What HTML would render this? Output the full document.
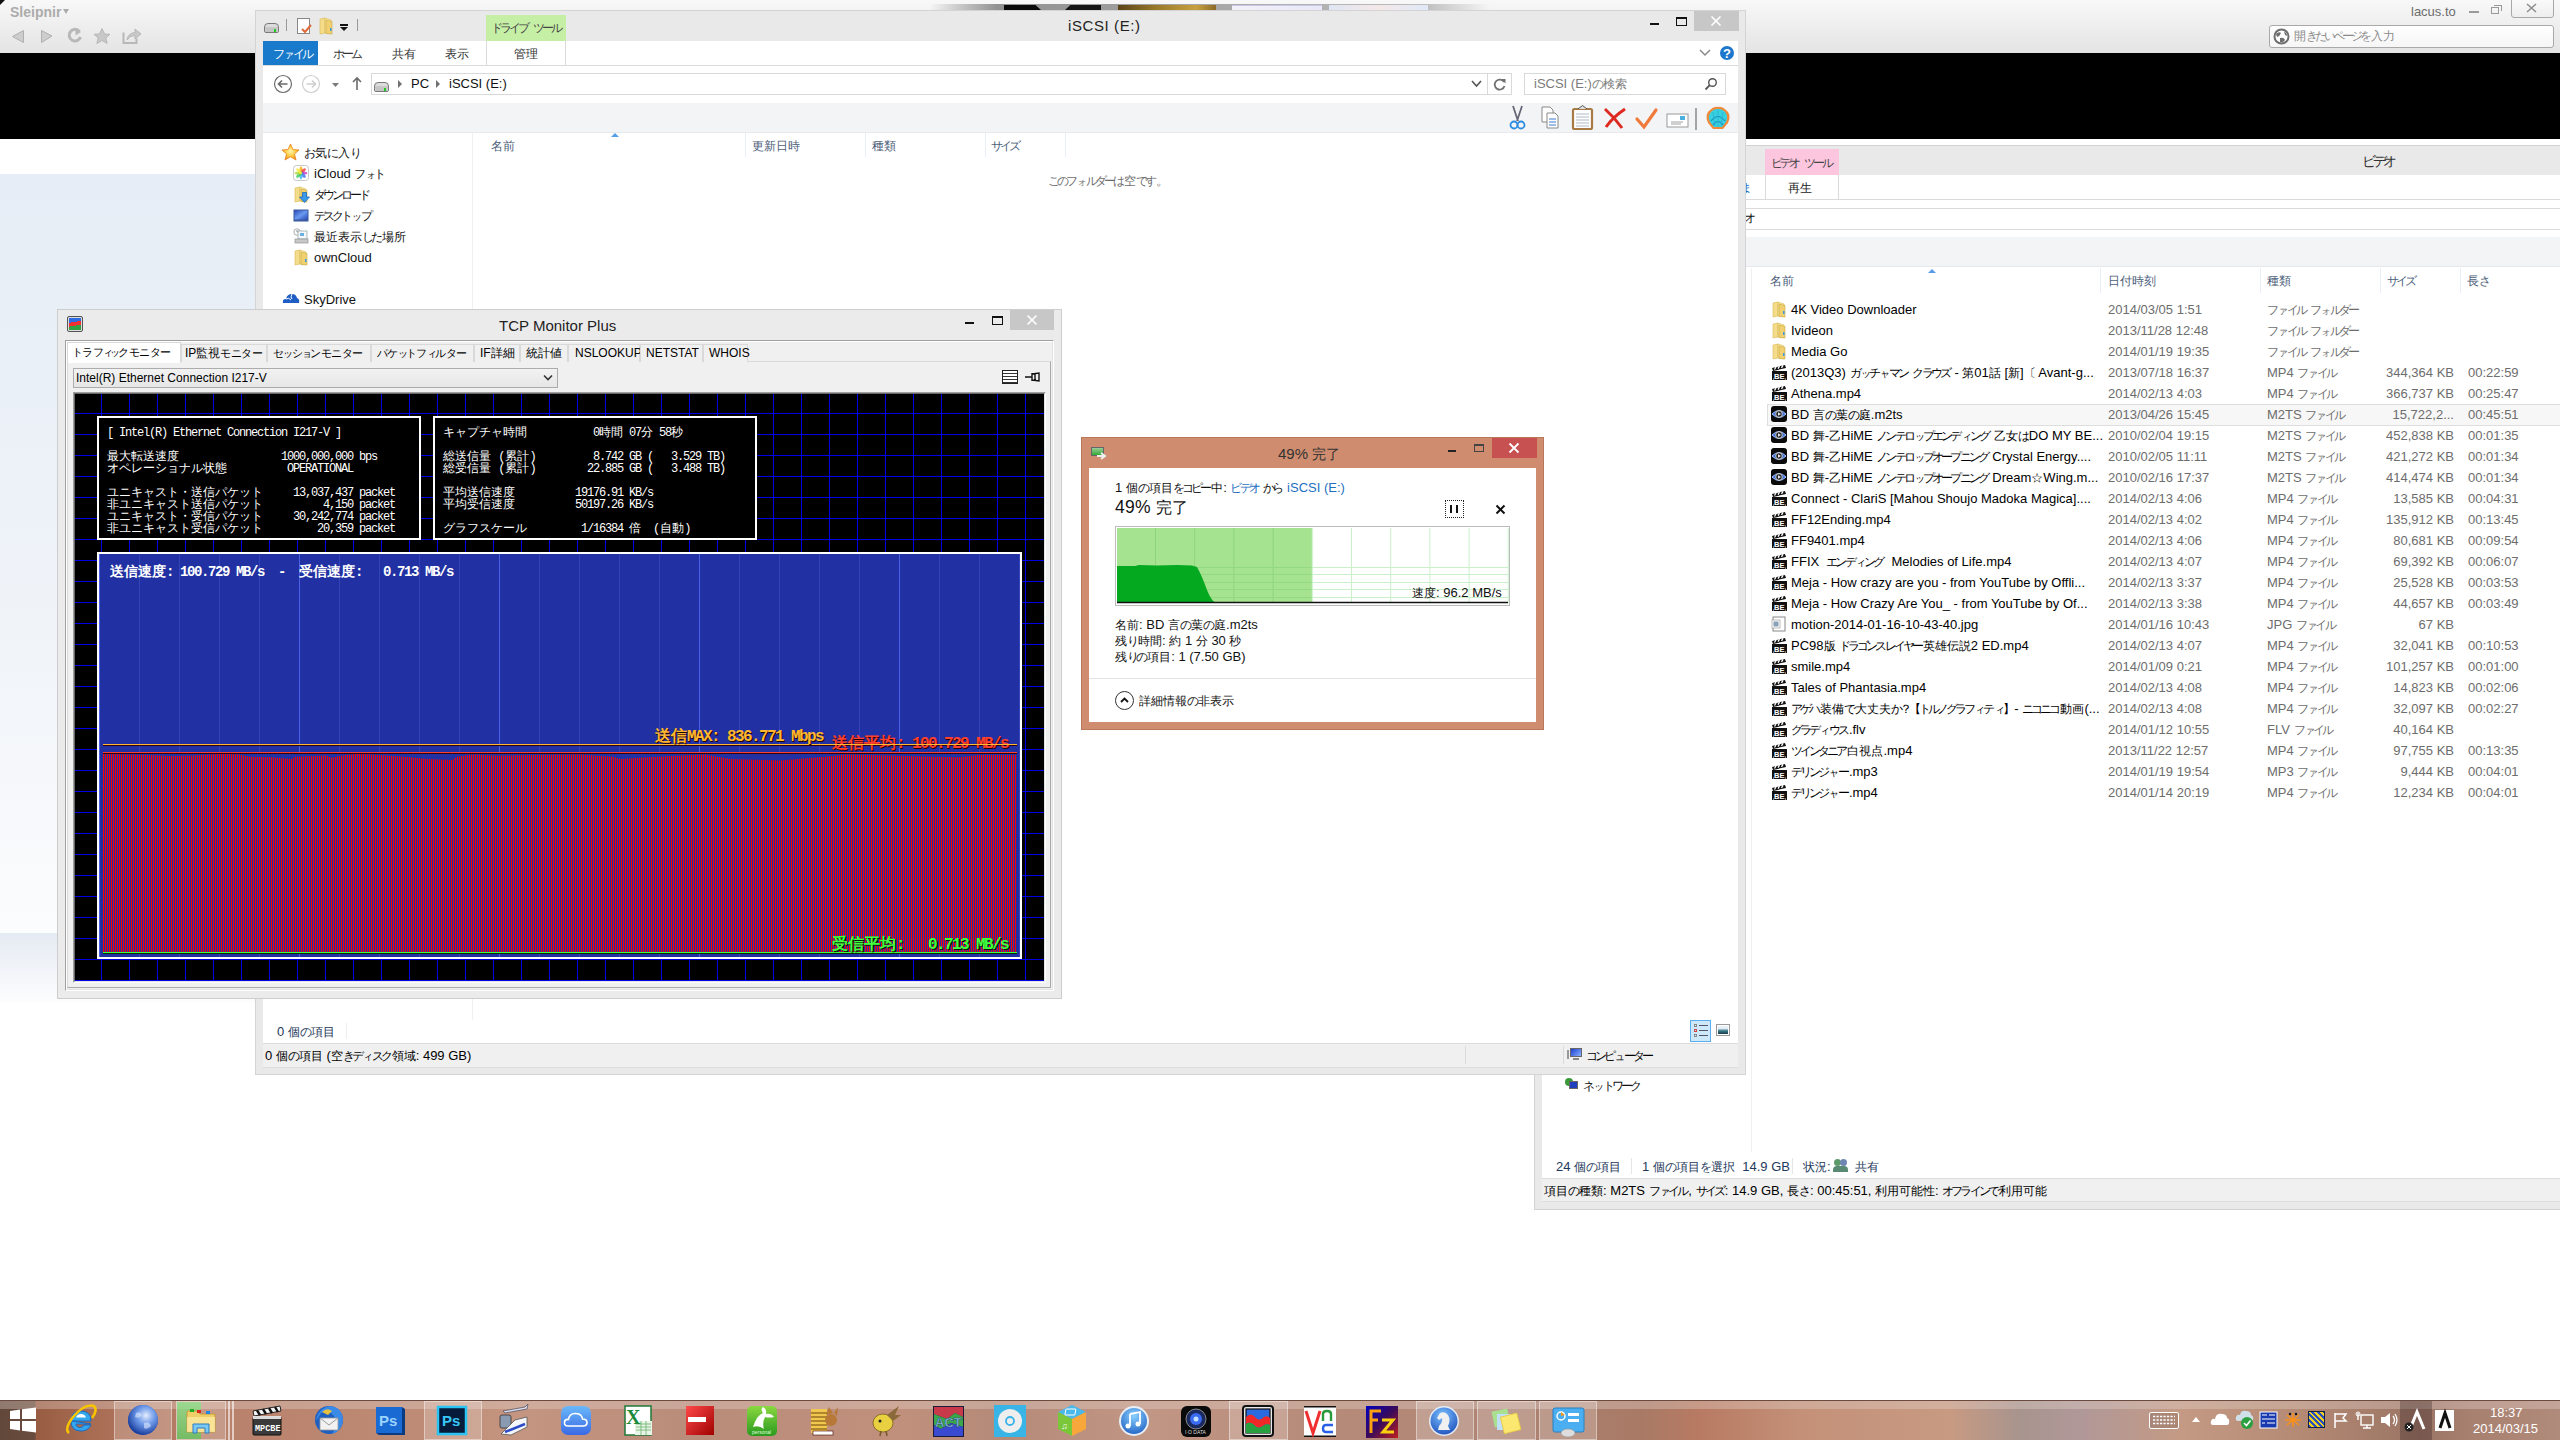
<!DOCTYPE html>
<html lang="ja"><head><meta charset="utf-8">
<style>
*{margin:0;padding:0;box-sizing:border-box}
html,body{width:2560px;height:1440px;overflow:hidden;background:#fff;font-family:"Liberation Sans",sans-serif;font-size:12px;color:#000}
.a{position:absolute}
.t{position:absolute;white-space:nowrap;line-height:1}
svg{position:absolute;overflow:visible}
/* browser */
#brtop{left:0;top:0;width:2560px;height:54px;background:linear-gradient(#f8f8f8,#ececec 60%,#e4e4e4);border-bottom:1px solid #cfcfcf}
#brblack{left:0;top:53px;width:2560px;height:86px;background:#000}
#brleft{left:0;top:174px;width:255px;height:759px;background:linear-gradient(#e6edf6,#f0f4f9 60%,#fbfcfd)}
#brleft2{left:0;top:933px;width:255px;height:70px;background:linear-gradient(#e5ebf3,#fdfdfe)}
.tb{font-size:12px;color:#000}
</style></head><body>
<!-- ===== Sleipnir background ===== -->
<div id="brtop" class="a"></div>
<div class="a" style="left:0;top:0;width:5px;height:5px;background:#111;clip-path:polygon(0 0,100% 0,0 100%)"></div>
<div class="t" style="left:10px;top:5px;font-size:14px;color:#acacac;font-weight:bold">Sleipnir</div>
<div class="a" style="left:63px;top:9px;width:0;height:0;border-left:3.5px solid transparent;border-right:3.5px solid transparent;border-top:5px solid #acacac"></div>
<svg style="left:0;top:0" width="160" height="54">
 <path d="M12.5 36.5 L23.5 30.5 L23.5 42.5 Z" fill="#cdcdcd" stroke="#b0b0b0" stroke-width="1"/>
 <path d="M52 36 L41.5 30.5 L41.5 42.5 Z" fill="#cdcdcd" stroke="#b0b0b0" stroke-width="1"/>
 <path d="M79.5 31.5 A5.8 5.8 0 1 0 80.5 37" fill="none" stroke="#b8b8b8" stroke-width="3"/>
 <path d="M75.5 28.5 L81 32 L75.5 35.5 Z" fill="#b8b8b8"/>
 <path d="M102 28.5 L104.6 34 L110 34.3 L105.8 38 L107.2 43.5 L102 40.5 L96.8 43.5 L98.2 38 L94 34.3 L99.4 34 Z" fill="#c8c8c8" stroke="#b0b0b0" stroke-width="0.8"/>
 <path d="M123.5 32.5 L123.5 43 L136.5 43 L136.5 38.5" fill="none" stroke="#b8b8b8" stroke-width="2"/>
 <path d="M127 40 Q128 33 135 32.5 L135 29 L141 34 L135 39 L135 35.5 Q130 35.5 127 40 Z" fill="#c8c8c8" stroke="#b0b0b0" stroke-width="0.8"/>
</svg>
<!-- tab thumbs strip -->
<div class="a" style="left:930px;top:4px;width:560px;height:6px;background:linear-gradient(90deg,rgba(160,160,160,0),rgba(120,120,120,.8) 12%,rgba(150,150,150,.6) 88%,rgba(160,160,160,0))"></div>
<div class="a" style="left:1004px;top:5px;width:37px;height:5px;background:#0a0a0a;clip-path:polygon(0 0,85% 0,100% 100%,0 100%)"></div>
<div class="a" style="left:1065px;top:5px;width:36px;height:5px;background:#141414;clip-path:polygon(15% 0,100% 0,100% 100%,0 100%)"></div>
<div class="a" style="left:1118px;top:5px;width:98px;height:5px;background:linear-gradient(90deg,#5a4418,#9a7a2a 40%,#c8a040 80%,#8a6a28)"></div>
<div class="a" style="left:1232px;top:5px;width:90px;height:5px;background:linear-gradient(90deg,#f4f0f8,#e8e8f8);border-top:1px solid #c8c8e8"></div>
<div class="a" style="left:1329px;top:5px;width:99px;height:5px;background:linear-gradient(90deg,#dfe6f4,#f4e8e8 50%,#e0e8f8)"></div>
<div class="t" style="left:2411px;top:5px;font-size:13px;color:#6c6c6c">lacus.to</div>
<div class="a" style="left:2469px;top:11px;width:10px;height:2px;background:#9a9a9a"></div>
<div class="a" style="left:2491px;top:7px;width:8px;height:7px;border:1.5px solid #9a9a9a"></div>
<div class="a" style="left:2494px;top:5px;width:8px;height:6px;border-top:1.5px solid #9a9a9a;border-right:1.5px solid #9a9a9a"></div>
<div class="a" style="left:2511px;top:-3px;width:43px;height:21px;border:1px solid #a8a8a8;border-radius:3px;background:linear-gradient(#fbfbfb,#eee)"></div>
<svg style="left:2526px;top:3px" width="12" height="10"><path d="M1 1 L10 9 M10 1 L1 9" stroke="#8a8a8a" stroke-width="1.4"/></svg>
<div class="a" style="left:2269px;top:25px;width:285px;height:23px;border:1px solid #a9a9a9;border-radius:3px;background:linear-gradient(#fff,#f6f6f6)"></div>
<svg style="left:2273px;top:28px" width="18" height="18"><circle cx="8.5" cy="8.5" r="7" fill="#fff" stroke="#6e6e6e" stroke-width="2"/><path d="M3 6 Q6 3 8 5 Q7 8 4 9 Z M7 10 Q11 9 12 12 Q10 15 7 14 Z M11 3.5 Q14 5 14 8 L12 7 Z" fill="#6e6e6e"/></svg>
<div class="t" style="left:2294px;top:29px;font-size:13.5px;color:#8a8a8a"><span style="font-size:.92em">開</span><span style="font-size:.9em;letter-spacing:-.25em">きたいページ</span><span style="font-size:.9em;letter-spacing:-.08em">を</span><span style="font-size:.92em">入力</span></div>
<div id="brblack" class="a"></div>
<div id="brleft" class="a"></div>
<div id="brleft2" class="a"></div>
<!-- ===== Video explorer (right, behind) ===== -->
<div class="a" style="left:1534px;top:139px;width:1026px;height:7px;background:#fff"></div>
<div class="a" style="left:1534px;top:145px;width:1026px;height:1065px;background:#e9e9e9;border:1px solid #d2d2d2;border-right:none"></div>
<div class="t" style="left:2362px;top:153px;font-size:15px;color:#333"><span style="font-size:.9em;letter-spacing:-.25em">ビデ</span><span style="font-size:.9em;letter-spacing:-.08em">オ</span></div>
<div class="a" style="left:1542px;top:175px;width:1018px;height:1027px;background:#fff"></div>
<div class="a" style="left:1765px;top:149px;width:74px;height:26px;background:#fcc6df"></div>
<div class="t" style="left:1771px;top:156px;font-size:13px;color:#444"><span style="font-size:.9em;letter-spacing:-.25em">ビデ</span><span style="font-size:.9em;letter-spacing:-.08em">オ</span> <span style="font-size:.9em;letter-spacing:-.25em">ツー</span><span style="font-size:.9em;letter-spacing:-.08em">ル</span></div>
<div class="a" style="left:1765px;top:175px;width:74px;height:25px;border-left:1px solid #dadada;border-right:1px solid #dadada"></div>
<div class="t" style="left:1788px;top:181px;font-size:13px;color:#222"><span style="font-size:.92em">再生</span></div>
<div class="t" style="left:1740px;top:181px;font-size:13px;color:#1e6fc0"><span style="font-size:.9em;letter-spacing:-.08em">ま</span></div>
<div class="a" style="left:1542px;top:199px;width:1018px;height:1px;background:#dadada"></div>
<div class="a" style="left:1542px;top:208px;width:1018px;height:1px;background:#dadada"></div>
<div class="t" style="left:1744px;top:211px;font-size:13px;color:#111"><span style="font-size:.9em;letter-spacing:-.08em">オ</span></div>
<div class="a" style="left:1542px;top:229px;width:1018px;height:1px;background:#dadada"></div>
<div class="a" style="left:1542px;top:237px;width:1018px;height:30px;background:#f3f4f6;border-bottom:1px solid #e6e8ec"></div>
<div class="a" style="left:1751px;top:268px;width:1px;height:884px;background:#f0f0f0"></div>
<!-- headers -->
<div class="t" style="left:1770px;top:274px;font-size:13px;color:#4c607a"><span style="font-size:.92em">名前</span></div>
<div class="a" style="left:1928px;top:269px;width:0;height:0;border-left:4px solid transparent;border-right:4px solid transparent;border-bottom:4px solid #569de5"></div>
<div class="a" style="left:2100px;top:268px;width:1px;height:25px;background:#e8eef5"></div>
<div class="t" style="left:2108px;top:274px;font-size:13px;color:#4c607a"><span style="font-size:.92em">日付時刻</span></div>
<div class="a" style="left:2260px;top:268px;width:1px;height:25px;background:#e8eef5"></div>
<div class="t" style="left:2267px;top:274px;font-size:13px;color:#4c607a"><span style="font-size:.92em">種類</span></div>
<div class="a" style="left:2380px;top:268px;width:1px;height:25px;background:#e8eef5"></div>
<div class="t" style="left:2387px;top:274px;font-size:13px;color:#4c607a"><span style="font-size:.9em;letter-spacing:-.25em">サイ</span><span style="font-size:.9em;letter-spacing:-.08em">ズ</span></div>
<div class="a" style="left:2460px;top:268px;width:1px;height:25px;background:#e8eef5"></div>
<div class="t" style="left:2467px;top:274px;font-size:13px;color:#4c607a"><span style="font-size:.92em">長</span><span style="font-size:.9em;letter-spacing:-.08em">さ</span></div>
<!-- selected row -->
<div class="a" style="left:1767px;top:404px;width:793px;height:22px;background:#f7f7f7;border:1px solid #dedede;border-right:none"></div>
<svg style="left:1771px;top:301px" width="16" height="17"><path d="M2 2 L7 1 L7 15 L2 16 Z" fill="#f4dc8a" stroke="#d8b850" stroke-width=".6"/><path d="M7 1 L13 3 L13 15.5 L7 15 Z" fill="#fbeaa8" stroke="#d8b850" stroke-width=".6"/><path d="M8 3 L14 4.5 L14 16 L8 15.5 Z" fill="#f0d070" stroke="#c8a840" stroke-width=".6"/><rect x="12" y="10" width="1.5" height="3" fill="#3a9ae0"/></svg>
<div class="t" style="left:1791px;top:303px;font-size:13px;color:#000">4K Video Downloader</div>
<div class="t" style="left:2108px;top:303px;font-size:13px;color:#6d6d6d">2014/03/05 1:51</div>
<div class="t" style="left:2267px;top:303px;font-size:13px;color:#6d6d6d"><span style="font-size:.9em;letter-spacing:-.08em">フ</span><span style="font-size:.78em;letter-spacing:-.15em">ァ</span><span style="font-size:.9em;letter-spacing:-.25em">イ</span><span style="font-size:.9em;letter-spacing:-.08em">ル</span> <span style="font-size:.9em;letter-spacing:-.08em">フ</span><span style="font-size:.78em;letter-spacing:-.15em">ォ</span><span style="font-size:.9em;letter-spacing:-.25em">ルダ</span><span style="font-size:.9em;letter-spacing:-.08em">ー</span></div>
<svg style="left:1771px;top:322px" width="16" height="17"><path d="M2 2 L7 1 L7 15 L2 16 Z" fill="#f4dc8a" stroke="#d8b850" stroke-width=".6"/><path d="M7 1 L13 3 L13 15.5 L7 15 Z" fill="#fbeaa8" stroke="#d8b850" stroke-width=".6"/><path d="M8 3 L14 4.5 L14 16 L8 15.5 Z" fill="#f0d070" stroke="#c8a840" stroke-width=".6"/><rect x="12" y="10" width="1.5" height="3" fill="#3a9ae0"/></svg>
<div class="t" style="left:1791px;top:324px;font-size:13px;color:#000">Ivideon</div>
<div class="t" style="left:2108px;top:324px;font-size:13px;color:#6d6d6d">2013/11/28 12:48</div>
<div class="t" style="left:2267px;top:324px;font-size:13px;color:#6d6d6d"><span style="font-size:.9em;letter-spacing:-.08em">フ</span><span style="font-size:.78em;letter-spacing:-.15em">ァ</span><span style="font-size:.9em;letter-spacing:-.25em">イ</span><span style="font-size:.9em;letter-spacing:-.08em">ル</span> <span style="font-size:.9em;letter-spacing:-.08em">フ</span><span style="font-size:.78em;letter-spacing:-.15em">ォ</span><span style="font-size:.9em;letter-spacing:-.25em">ルダ</span><span style="font-size:.9em;letter-spacing:-.08em">ー</span></div>
<svg style="left:1771px;top:343px" width="16" height="17"><path d="M2 2 L7 1 L7 15 L2 16 Z" fill="#f4dc8a" stroke="#d8b850" stroke-width=".6"/><path d="M7 1 L13 3 L13 15.5 L7 15 Z" fill="#fbeaa8" stroke="#d8b850" stroke-width=".6"/><path d="M8 3 L14 4.5 L14 16 L8 15.5 Z" fill="#f0d070" stroke="#c8a840" stroke-width=".6"/><rect x="12" y="10" width="1.5" height="3" fill="#3a9ae0"/></svg>
<div class="t" style="left:1791px;top:345px;font-size:13px;color:#000">Media Go</div>
<div class="t" style="left:2108px;top:345px;font-size:13px;color:#6d6d6d">2014/01/19 19:35</div>
<div class="t" style="left:2267px;top:345px;font-size:13px;color:#6d6d6d"><span style="font-size:.9em;letter-spacing:-.08em">フ</span><span style="font-size:.78em;letter-spacing:-.15em">ァ</span><span style="font-size:.9em;letter-spacing:-.25em">イ</span><span style="font-size:.9em;letter-spacing:-.08em">ル</span> <span style="font-size:.9em;letter-spacing:-.08em">フ</span><span style="font-size:.78em;letter-spacing:-.15em">ォ</span><span style="font-size:.9em;letter-spacing:-.25em">ルダ</span><span style="font-size:.9em;letter-spacing:-.08em">ー</span></div>
<svg style="left:1771px;top:364px" width="17" height="17"><path d="M1 4 L14 1 L15 4 L2 7 Z" fill="#111"/><path d="M3.5 5.5 L5 3 M7 4.7 L8.5 2.2 M10.5 3.9 L12 1.4" stroke="#fff" stroke-width="1.3"/><rect x="1" y="7" width="15" height="9" fill="#111"/><text x="3" y="14.5" font-family="Liberation Sans" font-size="7.5" font-weight="bold" fill="#fff">BE</text><circle cx="2.5" cy="15" r=".6" fill="#fff"/><circle cx="14.5" cy="15" r=".6" fill="#fff"/></svg>
<div class="t" style="left:1791px;top:366px;font-size:13px;color:#000">(2013Q3) <span style="font-size:.9em;letter-spacing:-.08em">ガ</span><span style="font-size:.78em;letter-spacing:-.15em">ッ</span><span style="font-size:.9em;letter-spacing:-.08em">チ</span><span style="font-size:.78em;letter-spacing:-.15em">ャ</span><span style="font-size:.9em;letter-spacing:-.25em">マ</span><span style="font-size:.9em;letter-spacing:-.08em">ン</span> <span style="font-size:.9em;letter-spacing:-.25em">クラウ</span><span style="font-size:.9em;letter-spacing:-.08em">ズ</span> - <span style="font-size:.92em">第</span>01<span style="font-size:.92em">話</span> [<span style="font-size:.92em">新</span>]<span style="font-size:.9em;letter-spacing:-.08em">〔</span> Avant-g...</div>
<div class="t" style="left:2108px;top:366px;font-size:13px;color:#6d6d6d">2013/07/18 16:37</div>
<div class="t" style="left:2267px;top:366px;font-size:13px;color:#6d6d6d">MP4 <span style="font-size:.9em;letter-spacing:-.08em">フ</span><span style="font-size:.78em;letter-spacing:-.15em">ァ</span><span style="font-size:.9em;letter-spacing:-.25em">イ</span><span style="font-size:.9em;letter-spacing:-.08em">ル</span></div>
<div class="t" style="right:106px;top:366px;font-size:13px;color:#6d6d6d;text-align:right">344,364 KB</div>
<div class="t" style="left:2468px;top:366px;font-size:13px;color:#6d6d6d">00:22:59</div>
<svg style="left:1771px;top:385px" width="17" height="17"><path d="M1 4 L14 1 L15 4 L2 7 Z" fill="#111"/><path d="M3.5 5.5 L5 3 M7 4.7 L8.5 2.2 M10.5 3.9 L12 1.4" stroke="#fff" stroke-width="1.3"/><rect x="1" y="7" width="15" height="9" fill="#111"/><text x="3" y="14.5" font-family="Liberation Sans" font-size="7.5" font-weight="bold" fill="#fff">BE</text><circle cx="2.5" cy="15" r=".6" fill="#fff"/><circle cx="14.5" cy="15" r=".6" fill="#fff"/></svg>
<div class="t" style="left:1791px;top:387px;font-size:13px;color:#000">Athena.mp4</div>
<div class="t" style="left:2108px;top:387px;font-size:13px;color:#6d6d6d">2014/02/13 4:03</div>
<div class="t" style="left:2267px;top:387px;font-size:13px;color:#6d6d6d">MP4 <span style="font-size:.9em;letter-spacing:-.08em">フ</span><span style="font-size:.78em;letter-spacing:-.15em">ァ</span><span style="font-size:.9em;letter-spacing:-.25em">イ</span><span style="font-size:.9em;letter-spacing:-.08em">ル</span></div>
<div class="t" style="right:106px;top:387px;font-size:13px;color:#6d6d6d;text-align:right">366,737 KB</div>
<div class="t" style="left:2468px;top:387px;font-size:13px;color:#6d6d6d">00:25:47</div>
<svg style="left:1771px;top:406px" width="16" height="16"><rect x="0" y="0" width="16" height="16" rx="3" fill="#0a0a0a"/><path d="M1 8 Q8 1 15 8 Q8 15 1 8 Z" fill="#3a6ad8" stroke="#a8c8ff" stroke-width="1"/><circle cx="8" cy="8" r="3.3" fill="#222" stroke="#ddd" stroke-width=".9"/><path d="M7 6.3 L10 8 L7 9.7 Z" fill="#eee"/></svg>
<div class="t" style="left:1791px;top:408px;font-size:13px;color:#000">BD <span style="font-size:.92em">言</span><span style="font-size:.9em;letter-spacing:-.08em">の</span><span style="font-size:.92em">葉</span><span style="font-size:.9em;letter-spacing:-.08em">の</span><span style="font-size:.92em">庭</span>.m2ts</div>
<div class="t" style="left:2108px;top:408px;font-size:13px;color:#6d6d6d">2013/04/26 15:45</div>
<div class="t" style="left:2267px;top:408px;font-size:13px;color:#6d6d6d">M2TS <span style="font-size:.9em;letter-spacing:-.08em">フ</span><span style="font-size:.78em;letter-spacing:-.15em">ァ</span><span style="font-size:.9em;letter-spacing:-.25em">イ</span><span style="font-size:.9em;letter-spacing:-.08em">ル</span></div>
<div class="t" style="right:106px;top:408px;font-size:13px;color:#6d6d6d;text-align:right">15,722,2...</div>
<div class="t" style="left:2468px;top:408px;font-size:13px;color:#6d6d6d">00:45:51</div>
<svg style="left:1771px;top:427px" width="16" height="16"><rect x="0" y="0" width="16" height="16" rx="3" fill="#0a0a0a"/><path d="M1 8 Q8 1 15 8 Q8 15 1 8 Z" fill="#3a6ad8" stroke="#a8c8ff" stroke-width="1"/><circle cx="8" cy="8" r="3.3" fill="#222" stroke="#ddd" stroke-width=".9"/><path d="M7 6.3 L10 8 L7 9.7 Z" fill="#eee"/></svg>
<div class="t" style="left:1791px;top:429px;font-size:13px;color:#000">BD <span style="font-size:.92em">舞</span>-<span style="font-size:.92em">乙</span>HiME <span style="font-size:.9em;letter-spacing:-.25em">ノンテ</span><span style="font-size:.9em;letter-spacing:-.08em">ロ</span><span style="font-size:.78em;letter-spacing:-.15em">ッ</span><span style="font-size:.9em;letter-spacing:-.25em">プエン</span><span style="font-size:.9em;letter-spacing:-.08em">デ</span><span style="font-size:.78em;letter-spacing:-.15em">ィ</span><span style="font-size:.9em;letter-spacing:-.25em">ン</span><span style="font-size:.9em;letter-spacing:-.08em">グ</span> <span style="font-size:.92em">乙女</span><span style="font-size:.9em;letter-spacing:-.08em">は</span>DO MY BE...</div>
<div class="t" style="left:2108px;top:429px;font-size:13px;color:#6d6d6d">2010/02/04 19:15</div>
<div class="t" style="left:2267px;top:429px;font-size:13px;color:#6d6d6d">M2TS <span style="font-size:.9em;letter-spacing:-.08em">フ</span><span style="font-size:.78em;letter-spacing:-.15em">ァ</span><span style="font-size:.9em;letter-spacing:-.25em">イ</span><span style="font-size:.9em;letter-spacing:-.08em">ル</span></div>
<div class="t" style="right:106px;top:429px;font-size:13px;color:#6d6d6d;text-align:right">452,838 KB</div>
<div class="t" style="left:2468px;top:429px;font-size:13px;color:#6d6d6d">00:01:35</div>
<svg style="left:1771px;top:448px" width="16" height="16"><rect x="0" y="0" width="16" height="16" rx="3" fill="#0a0a0a"/><path d="M1 8 Q8 1 15 8 Q8 15 1 8 Z" fill="#3a6ad8" stroke="#a8c8ff" stroke-width="1"/><circle cx="8" cy="8" r="3.3" fill="#222" stroke="#ddd" stroke-width=".9"/><path d="M7 6.3 L10 8 L7 9.7 Z" fill="#eee"/></svg>
<div class="t" style="left:1791px;top:450px;font-size:13px;color:#000">BD <span style="font-size:.92em">舞</span>-<span style="font-size:.92em">乙</span>HiME <span style="font-size:.9em;letter-spacing:-.25em">ノンテ</span><span style="font-size:.9em;letter-spacing:-.08em">ロ</span><span style="font-size:.78em;letter-spacing:-.15em">ッ</span><span style="font-size:.9em;letter-spacing:-.25em">プオープニン</span><span style="font-size:.9em;letter-spacing:-.08em">グ</span> Crystal Energy....</div>
<div class="t" style="left:2108px;top:450px;font-size:13px;color:#6d6d6d">2010/02/05 11:11</div>
<div class="t" style="left:2267px;top:450px;font-size:13px;color:#6d6d6d">M2TS <span style="font-size:.9em;letter-spacing:-.08em">フ</span><span style="font-size:.78em;letter-spacing:-.15em">ァ</span><span style="font-size:.9em;letter-spacing:-.25em">イ</span><span style="font-size:.9em;letter-spacing:-.08em">ル</span></div>
<div class="t" style="right:106px;top:450px;font-size:13px;color:#6d6d6d;text-align:right">421,272 KB</div>
<div class="t" style="left:2468px;top:450px;font-size:13px;color:#6d6d6d">00:01:34</div>
<svg style="left:1771px;top:469px" width="16" height="16"><rect x="0" y="0" width="16" height="16" rx="3" fill="#0a0a0a"/><path d="M1 8 Q8 1 15 8 Q8 15 1 8 Z" fill="#3a6ad8" stroke="#a8c8ff" stroke-width="1"/><circle cx="8" cy="8" r="3.3" fill="#222" stroke="#ddd" stroke-width=".9"/><path d="M7 6.3 L10 8 L7 9.7 Z" fill="#eee"/></svg>
<div class="t" style="left:1791px;top:471px;font-size:13px;color:#000">BD <span style="font-size:.92em">舞</span>-<span style="font-size:.92em">乙</span>HiME <span style="font-size:.9em;letter-spacing:-.25em">ノンテ</span><span style="font-size:.9em;letter-spacing:-.08em">ロ</span><span style="font-size:.78em;letter-spacing:-.15em">ッ</span><span style="font-size:.9em;letter-spacing:-.25em">プオープニン</span><span style="font-size:.9em;letter-spacing:-.08em">グ</span> Dream<span style="font-size:.92em">☆</span>Wing.m...</div>
<div class="t" style="left:2108px;top:471px;font-size:13px;color:#6d6d6d">2010/02/16 17:37</div>
<div class="t" style="left:2267px;top:471px;font-size:13px;color:#6d6d6d">M2TS <span style="font-size:.9em;letter-spacing:-.08em">フ</span><span style="font-size:.78em;letter-spacing:-.15em">ァ</span><span style="font-size:.9em;letter-spacing:-.25em">イ</span><span style="font-size:.9em;letter-spacing:-.08em">ル</span></div>
<div class="t" style="right:106px;top:471px;font-size:13px;color:#6d6d6d;text-align:right">414,474 KB</div>
<div class="t" style="left:2468px;top:471px;font-size:13px;color:#6d6d6d">00:01:34</div>
<svg style="left:1771px;top:490px" width="17" height="17"><path d="M1 4 L14 1 L15 4 L2 7 Z" fill="#111"/><path d="M3.5 5.5 L5 3 M7 4.7 L8.5 2.2 M10.5 3.9 L12 1.4" stroke="#fff" stroke-width="1.3"/><rect x="1" y="7" width="15" height="9" fill="#111"/><text x="3" y="14.5" font-family="Liberation Sans" font-size="7.5" font-weight="bold" fill="#fff">BE</text><circle cx="2.5" cy="15" r=".6" fill="#fff"/><circle cx="14.5" cy="15" r=".6" fill="#fff"/></svg>
<div class="t" style="left:1791px;top:492px;font-size:13px;color:#000">Connect - ClariS [Mahou Shoujo Madoka Magica]....</div>
<div class="t" style="left:2108px;top:492px;font-size:13px;color:#6d6d6d">2014/02/13 4:06</div>
<div class="t" style="left:2267px;top:492px;font-size:13px;color:#6d6d6d">MP4 <span style="font-size:.9em;letter-spacing:-.08em">フ</span><span style="font-size:.78em;letter-spacing:-.15em">ァ</span><span style="font-size:.9em;letter-spacing:-.25em">イ</span><span style="font-size:.9em;letter-spacing:-.08em">ル</span></div>
<div class="t" style="right:106px;top:492px;font-size:13px;color:#6d6d6d;text-align:right">13,585 KB</div>
<div class="t" style="left:2468px;top:492px;font-size:13px;color:#6d6d6d">00:04:31</div>
<svg style="left:1771px;top:511px" width="17" height="17"><path d="M1 4 L14 1 L15 4 L2 7 Z" fill="#111"/><path d="M3.5 5.5 L5 3 M7 4.7 L8.5 2.2 M10.5 3.9 L12 1.4" stroke="#fff" stroke-width="1.3"/><rect x="1" y="7" width="15" height="9" fill="#111"/><text x="3" y="14.5" font-family="Liberation Sans" font-size="7.5" font-weight="bold" fill="#fff">BE</text><circle cx="2.5" cy="15" r=".6" fill="#fff"/><circle cx="14.5" cy="15" r=".6" fill="#fff"/></svg>
<div class="t" style="left:1791px;top:513px;font-size:13px;color:#000">FF12Ending.mp4</div>
<div class="t" style="left:2108px;top:513px;font-size:13px;color:#6d6d6d">2014/02/13 4:02</div>
<div class="t" style="left:2267px;top:513px;font-size:13px;color:#6d6d6d">MP4 <span style="font-size:.9em;letter-spacing:-.08em">フ</span><span style="font-size:.78em;letter-spacing:-.15em">ァ</span><span style="font-size:.9em;letter-spacing:-.25em">イ</span><span style="font-size:.9em;letter-spacing:-.08em">ル</span></div>
<div class="t" style="right:106px;top:513px;font-size:13px;color:#6d6d6d;text-align:right">135,912 KB</div>
<div class="t" style="left:2468px;top:513px;font-size:13px;color:#6d6d6d">00:13:45</div>
<svg style="left:1771px;top:532px" width="17" height="17"><path d="M1 4 L14 1 L15 4 L2 7 Z" fill="#111"/><path d="M3.5 5.5 L5 3 M7 4.7 L8.5 2.2 M10.5 3.9 L12 1.4" stroke="#fff" stroke-width="1.3"/><rect x="1" y="7" width="15" height="9" fill="#111"/><text x="3" y="14.5" font-family="Liberation Sans" font-size="7.5" font-weight="bold" fill="#fff">BE</text><circle cx="2.5" cy="15" r=".6" fill="#fff"/><circle cx="14.5" cy="15" r=".6" fill="#fff"/></svg>
<div class="t" style="left:1791px;top:534px;font-size:13px;color:#000">FF9401.mp4</div>
<div class="t" style="left:2108px;top:534px;font-size:13px;color:#6d6d6d">2014/02/13 4:06</div>
<div class="t" style="left:2267px;top:534px;font-size:13px;color:#6d6d6d">MP4 <span style="font-size:.9em;letter-spacing:-.08em">フ</span><span style="font-size:.78em;letter-spacing:-.15em">ァ</span><span style="font-size:.9em;letter-spacing:-.25em">イ</span><span style="font-size:.9em;letter-spacing:-.08em">ル</span></div>
<div class="t" style="right:106px;top:534px;font-size:13px;color:#6d6d6d;text-align:right">80,681 KB</div>
<div class="t" style="left:2468px;top:534px;font-size:13px;color:#6d6d6d">00:09:54</div>
<svg style="left:1771px;top:553px" width="17" height="17"><path d="M1 4 L14 1 L15 4 L2 7 Z" fill="#111"/><path d="M3.5 5.5 L5 3 M7 4.7 L8.5 2.2 M10.5 3.9 L12 1.4" stroke="#fff" stroke-width="1.3"/><rect x="1" y="7" width="15" height="9" fill="#111"/><text x="3" y="14.5" font-family="Liberation Sans" font-size="7.5" font-weight="bold" fill="#fff">BE</text><circle cx="2.5" cy="15" r=".6" fill="#fff"/><circle cx="14.5" cy="15" r=".6" fill="#fff"/></svg>
<div class="t" style="left:1791px;top:555px;font-size:13px;color:#000">FFIX&nbsp;&nbsp;<span style="font-size:.9em;letter-spacing:-.25em">エン</span><span style="font-size:.9em;letter-spacing:-.08em">デ</span><span style="font-size:.78em;letter-spacing:-.15em">ィ</span><span style="font-size:.9em;letter-spacing:-.25em">ン</span><span style="font-size:.9em;letter-spacing:-.08em">グ</span>&nbsp;&nbsp;Melodies of Life.mp4</div>
<div class="t" style="left:2108px;top:555px;font-size:13px;color:#6d6d6d">2014/02/13 4:07</div>
<div class="t" style="left:2267px;top:555px;font-size:13px;color:#6d6d6d">MP4 <span style="font-size:.9em;letter-spacing:-.08em">フ</span><span style="font-size:.78em;letter-spacing:-.15em">ァ</span><span style="font-size:.9em;letter-spacing:-.25em">イ</span><span style="font-size:.9em;letter-spacing:-.08em">ル</span></div>
<div class="t" style="right:106px;top:555px;font-size:13px;color:#6d6d6d;text-align:right">69,392 KB</div>
<div class="t" style="left:2468px;top:555px;font-size:13px;color:#6d6d6d">00:06:07</div>
<svg style="left:1771px;top:574px" width="17" height="17"><path d="M1 4 L14 1 L15 4 L2 7 Z" fill="#111"/><path d="M3.5 5.5 L5 3 M7 4.7 L8.5 2.2 M10.5 3.9 L12 1.4" stroke="#fff" stroke-width="1.3"/><rect x="1" y="7" width="15" height="9" fill="#111"/><text x="3" y="14.5" font-family="Liberation Sans" font-size="7.5" font-weight="bold" fill="#fff">BE</text><circle cx="2.5" cy="15" r=".6" fill="#fff"/><circle cx="14.5" cy="15" r=".6" fill="#fff"/></svg>
<div class="t" style="left:1791px;top:576px;font-size:13px;color:#000">Meja - How crazy are you - from YouTube by Offli...</div>
<div class="t" style="left:2108px;top:576px;font-size:13px;color:#6d6d6d">2014/02/13 3:37</div>
<div class="t" style="left:2267px;top:576px;font-size:13px;color:#6d6d6d">MP4 <span style="font-size:.9em;letter-spacing:-.08em">フ</span><span style="font-size:.78em;letter-spacing:-.15em">ァ</span><span style="font-size:.9em;letter-spacing:-.25em">イ</span><span style="font-size:.9em;letter-spacing:-.08em">ル</span></div>
<div class="t" style="right:106px;top:576px;font-size:13px;color:#6d6d6d;text-align:right">25,528 KB</div>
<div class="t" style="left:2468px;top:576px;font-size:13px;color:#6d6d6d">00:03:53</div>
<svg style="left:1771px;top:595px" width="17" height="17"><path d="M1 4 L14 1 L15 4 L2 7 Z" fill="#111"/><path d="M3.5 5.5 L5 3 M7 4.7 L8.5 2.2 M10.5 3.9 L12 1.4" stroke="#fff" stroke-width="1.3"/><rect x="1" y="7" width="15" height="9" fill="#111"/><text x="3" y="14.5" font-family="Liberation Sans" font-size="7.5" font-weight="bold" fill="#fff">BE</text><circle cx="2.5" cy="15" r=".6" fill="#fff"/><circle cx="14.5" cy="15" r=".6" fill="#fff"/></svg>
<div class="t" style="left:1791px;top:597px;font-size:13px;color:#000">Meja - How Crazy Are You_ - from YouTube by Of...</div>
<div class="t" style="left:2108px;top:597px;font-size:13px;color:#6d6d6d">2014/02/13 3:38</div>
<div class="t" style="left:2267px;top:597px;font-size:13px;color:#6d6d6d">MP4 <span style="font-size:.9em;letter-spacing:-.08em">フ</span><span style="font-size:.78em;letter-spacing:-.15em">ァ</span><span style="font-size:.9em;letter-spacing:-.25em">イ</span><span style="font-size:.9em;letter-spacing:-.08em">ル</span></div>
<div class="t" style="right:106px;top:597px;font-size:13px;color:#6d6d6d;text-align:right">44,657 KB</div>
<div class="t" style="left:2468px;top:597px;font-size:13px;color:#6d6d6d">00:03:49</div>
<svg style="left:1771px;top:616px" width="16" height="16"><rect x="2" y="1" width="12" height="14" fill="#fff" stroke="#888" stroke-width="1"/><rect x="1" y="4" width="8" height="8" fill="#fff" stroke="#aaa" stroke-width=".8"/><rect x="2.5" y="5.5" width="5" height="5" fill="#8aa0b8"/></svg>
<div class="t" style="left:1791px;top:618px;font-size:13px;color:#000">motion-2014-01-16-10-43-40.jpg</div>
<div class="t" style="left:2108px;top:618px;font-size:13px;color:#6d6d6d">2014/01/16 10:43</div>
<div class="t" style="left:2267px;top:618px;font-size:13px;color:#6d6d6d">JPG <span style="font-size:.9em;letter-spacing:-.08em">フ</span><span style="font-size:.78em;letter-spacing:-.15em">ァ</span><span style="font-size:.9em;letter-spacing:-.25em">イ</span><span style="font-size:.9em;letter-spacing:-.08em">ル</span></div>
<div class="t" style="right:106px;top:618px;font-size:13px;color:#6d6d6d;text-align:right">67 KB</div>
<svg style="left:1771px;top:637px" width="17" height="17"><path d="M1 4 L14 1 L15 4 L2 7 Z" fill="#111"/><path d="M3.5 5.5 L5 3 M7 4.7 L8.5 2.2 M10.5 3.9 L12 1.4" stroke="#fff" stroke-width="1.3"/><rect x="1" y="7" width="15" height="9" fill="#111"/><text x="3" y="14.5" font-family="Liberation Sans" font-size="7.5" font-weight="bold" fill="#fff">BE</text><circle cx="2.5" cy="15" r=".6" fill="#fff"/><circle cx="14.5" cy="15" r=".6" fill="#fff"/></svg>
<div class="t" style="left:1791px;top:639px;font-size:13px;color:#000">PC98<span style="font-size:.92em">版</span> <span style="font-size:.9em;letter-spacing:-.25em">ドラゴンスレイヤ</span><span style="font-size:.9em;letter-spacing:-.08em">ー</span><span style="font-size:.92em">英雄伝説</span>2 ED.mp4</div>
<div class="t" style="left:2108px;top:639px;font-size:13px;color:#6d6d6d">2014/02/13 4:07</div>
<div class="t" style="left:2267px;top:639px;font-size:13px;color:#6d6d6d">MP4 <span style="font-size:.9em;letter-spacing:-.08em">フ</span><span style="font-size:.78em;letter-spacing:-.15em">ァ</span><span style="font-size:.9em;letter-spacing:-.25em">イ</span><span style="font-size:.9em;letter-spacing:-.08em">ル</span></div>
<div class="t" style="right:106px;top:639px;font-size:13px;color:#6d6d6d;text-align:right">32,041 KB</div>
<div class="t" style="left:2468px;top:639px;font-size:13px;color:#6d6d6d">00:10:53</div>
<svg style="left:1771px;top:658px" width="17" height="17"><path d="M1 4 L14 1 L15 4 L2 7 Z" fill="#111"/><path d="M3.5 5.5 L5 3 M7 4.7 L8.5 2.2 M10.5 3.9 L12 1.4" stroke="#fff" stroke-width="1.3"/><rect x="1" y="7" width="15" height="9" fill="#111"/><text x="3" y="14.5" font-family="Liberation Sans" font-size="7.5" font-weight="bold" fill="#fff">BE</text><circle cx="2.5" cy="15" r=".6" fill="#fff"/><circle cx="14.5" cy="15" r=".6" fill="#fff"/></svg>
<div class="t" style="left:1791px;top:660px;font-size:13px;color:#000">smile.mp4</div>
<div class="t" style="left:2108px;top:660px;font-size:13px;color:#6d6d6d">2014/01/09 0:21</div>
<div class="t" style="left:2267px;top:660px;font-size:13px;color:#6d6d6d">MP4 <span style="font-size:.9em;letter-spacing:-.08em">フ</span><span style="font-size:.78em;letter-spacing:-.15em">ァ</span><span style="font-size:.9em;letter-spacing:-.25em">イ</span><span style="font-size:.9em;letter-spacing:-.08em">ル</span></div>
<div class="t" style="right:106px;top:660px;font-size:13px;color:#6d6d6d;text-align:right">101,257 KB</div>
<div class="t" style="left:2468px;top:660px;font-size:13px;color:#6d6d6d">00:01:00</div>
<svg style="left:1771px;top:679px" width="17" height="17"><path d="M1 4 L14 1 L15 4 L2 7 Z" fill="#111"/><path d="M3.5 5.5 L5 3 M7 4.7 L8.5 2.2 M10.5 3.9 L12 1.4" stroke="#fff" stroke-width="1.3"/><rect x="1" y="7" width="15" height="9" fill="#111"/><text x="3" y="14.5" font-family="Liberation Sans" font-size="7.5" font-weight="bold" fill="#fff">BE</text><circle cx="2.5" cy="15" r=".6" fill="#fff"/><circle cx="14.5" cy="15" r=".6" fill="#fff"/></svg>
<div class="t" style="left:1791px;top:681px;font-size:13px;color:#000">Tales of Phantasia.mp4</div>
<div class="t" style="left:2108px;top:681px;font-size:13px;color:#6d6d6d">2014/02/13 4:08</div>
<div class="t" style="left:2267px;top:681px;font-size:13px;color:#6d6d6d">MP4 <span style="font-size:.9em;letter-spacing:-.08em">フ</span><span style="font-size:.78em;letter-spacing:-.15em">ァ</span><span style="font-size:.9em;letter-spacing:-.25em">イ</span><span style="font-size:.9em;letter-spacing:-.08em">ル</span></div>
<div class="t" style="right:106px;top:681px;font-size:13px;color:#6d6d6d;text-align:right">14,823 KB</div>
<div class="t" style="left:2468px;top:681px;font-size:13px;color:#6d6d6d">00:02:06</div>
<svg style="left:1771px;top:700px" width="17" height="17"><path d="M1 4 L14 1 L15 4 L2 7 Z" fill="#111"/><path d="M3.5 5.5 L5 3 M7 4.7 L8.5 2.2 M10.5 3.9 L12 1.4" stroke="#fff" stroke-width="1.3"/><rect x="1" y="7" width="15" height="9" fill="#111"/><text x="3" y="14.5" font-family="Liberation Sans" font-size="7.5" font-weight="bold" fill="#fff">BE</text><circle cx="2.5" cy="15" r=".6" fill="#fff"/><circle cx="14.5" cy="15" r=".6" fill="#fff"/></svg>
<div class="t" style="left:1791px;top:702px;font-size:13px;color:#000"><span style="font-size:.9em;letter-spacing:-.25em">アゲ</span><span style="font-size:.9em;letter-spacing:-.08em">ハ</span><span style="font-size:.92em">装備</span><span style="font-size:.9em;letter-spacing:-.08em">で</span><span style="font-size:.92em">大丈夫</span><span style="font-size:.9em;letter-spacing:-.25em">か？【トルノグラ</span><span style="font-size:.9em;letter-spacing:-.08em">フ</span><span style="font-size:.78em;letter-spacing:-.15em">ィ</span><span style="font-size:.9em;letter-spacing:-.08em">テ</span><span style="font-size:.78em;letter-spacing:-.15em">ィ</span><span style="font-size:.9em;letter-spacing:-.08em">】</span>- <span style="font-size:.9em;letter-spacing:-.25em">ニコニ</span><span style="font-size:.9em;letter-spacing:-.08em">コ</span><span style="font-size:.92em">動画</span>(...</div>
<div class="t" style="left:2108px;top:702px;font-size:13px;color:#6d6d6d">2014/02/13 4:08</div>
<div class="t" style="left:2267px;top:702px;font-size:13px;color:#6d6d6d">MP4 <span style="font-size:.9em;letter-spacing:-.08em">フ</span><span style="font-size:.78em;letter-spacing:-.15em">ァ</span><span style="font-size:.9em;letter-spacing:-.25em">イ</span><span style="font-size:.9em;letter-spacing:-.08em">ル</span></div>
<div class="t" style="right:106px;top:702px;font-size:13px;color:#6d6d6d;text-align:right">32,097 KB</div>
<div class="t" style="left:2468px;top:702px;font-size:13px;color:#6d6d6d">00:02:27</div>
<svg style="left:1771px;top:721px" width="17" height="17"><path d="M1 4 L14 1 L15 4 L2 7 Z" fill="#111"/><path d="M3.5 5.5 L5 3 M7 4.7 L8.5 2.2 M10.5 3.9 L12 1.4" stroke="#fff" stroke-width="1.3"/><rect x="1" y="7" width="15" height="9" fill="#111"/><text x="3" y="14.5" font-family="Liberation Sans" font-size="7.5" font-weight="bold" fill="#fff">BE</text><circle cx="2.5" cy="15" r=".6" fill="#fff"/><circle cx="14.5" cy="15" r=".6" fill="#fff"/></svg>
<div class="t" style="left:1791px;top:723px;font-size:13px;color:#000"><span style="font-size:.9em;letter-spacing:-.25em">グラ</span><span style="font-size:.9em;letter-spacing:-.08em">デ</span><span style="font-size:.78em;letter-spacing:-.15em">ィ</span><span style="font-size:.9em;letter-spacing:-.25em">ウ</span><span style="font-size:.9em;letter-spacing:-.08em">ス</span>.flv</div>
<div class="t" style="left:2108px;top:723px;font-size:13px;color:#6d6d6d">2014/01/12 10:55</div>
<div class="t" style="left:2267px;top:723px;font-size:13px;color:#6d6d6d">FLV <span style="font-size:.9em;letter-spacing:-.08em">フ</span><span style="font-size:.78em;letter-spacing:-.15em">ァ</span><span style="font-size:.9em;letter-spacing:-.25em">イ</span><span style="font-size:.9em;letter-spacing:-.08em">ル</span></div>
<div class="t" style="right:106px;top:723px;font-size:13px;color:#6d6d6d;text-align:right">40,164 KB</div>
<svg style="left:1771px;top:742px" width="17" height="17"><path d="M1 4 L14 1 L15 4 L2 7 Z" fill="#111"/><path d="M3.5 5.5 L5 3 M7 4.7 L8.5 2.2 M10.5 3.9 L12 1.4" stroke="#fff" stroke-width="1.3"/><rect x="1" y="7" width="15" height="9" fill="#111"/><text x="3" y="14.5" font-family="Liberation Sans" font-size="7.5" font-weight="bold" fill="#fff">BE</text><circle cx="2.5" cy="15" r=".6" fill="#fff"/><circle cx="14.5" cy="15" r=".6" fill="#fff"/></svg>
<div class="t" style="left:1791px;top:744px;font-size:13px;color:#000"><span style="font-size:.9em;letter-spacing:-.25em">ツインタニ</span><span style="font-size:.9em;letter-spacing:-.08em">ア</span><span style="font-size:.92em">白視点</span>.mp4</div>
<div class="t" style="left:2108px;top:744px;font-size:13px;color:#6d6d6d">2013/11/22 12:57</div>
<div class="t" style="left:2267px;top:744px;font-size:13px;color:#6d6d6d">MP4 <span style="font-size:.9em;letter-spacing:-.08em">フ</span><span style="font-size:.78em;letter-spacing:-.15em">ァ</span><span style="font-size:.9em;letter-spacing:-.25em">イ</span><span style="font-size:.9em;letter-spacing:-.08em">ル</span></div>
<div class="t" style="right:106px;top:744px;font-size:13px;color:#6d6d6d;text-align:right">97,755 KB</div>
<div class="t" style="left:2468px;top:744px;font-size:13px;color:#6d6d6d">00:13:35</div>
<svg style="left:1771px;top:763px" width="17" height="17"><path d="M1 4 L14 1 L15 4 L2 7 Z" fill="#111"/><path d="M3.5 5.5 L5 3 M7 4.7 L8.5 2.2 M10.5 3.9 L12 1.4" stroke="#fff" stroke-width="1.3"/><rect x="1" y="7" width="15" height="9" fill="#111"/><text x="3" y="14.5" font-family="Liberation Sans" font-size="7.5" font-weight="bold" fill="#fff">BE</text><circle cx="2.5" cy="15" r=".6" fill="#fff"/><circle cx="14.5" cy="15" r=".6" fill="#fff"/></svg>
<div class="t" style="left:1791px;top:765px;font-size:13px;color:#000"><span style="font-size:.9em;letter-spacing:-.25em">デリン</span><span style="font-size:.9em;letter-spacing:-.08em">ジ</span><span style="font-size:.78em;letter-spacing:-.15em">ャ</span><span style="font-size:.9em;letter-spacing:-.08em">ー</span>.mp3</div>
<div class="t" style="left:2108px;top:765px;font-size:13px;color:#6d6d6d">2014/01/19 19:54</div>
<div class="t" style="left:2267px;top:765px;font-size:13px;color:#6d6d6d">MP3 <span style="font-size:.9em;letter-spacing:-.08em">フ</span><span style="font-size:.78em;letter-spacing:-.15em">ァ</span><span style="font-size:.9em;letter-spacing:-.25em">イ</span><span style="font-size:.9em;letter-spacing:-.08em">ル</span></div>
<div class="t" style="right:106px;top:765px;font-size:13px;color:#6d6d6d;text-align:right">9,444 KB</div>
<div class="t" style="left:2468px;top:765px;font-size:13px;color:#6d6d6d">00:04:01</div>
<svg style="left:1771px;top:784px" width="17" height="17"><path d="M1 4 L14 1 L15 4 L2 7 Z" fill="#111"/><path d="M3.5 5.5 L5 3 M7 4.7 L8.5 2.2 M10.5 3.9 L12 1.4" stroke="#fff" stroke-width="1.3"/><rect x="1" y="7" width="15" height="9" fill="#111"/><text x="3" y="14.5" font-family="Liberation Sans" font-size="7.5" font-weight="bold" fill="#fff">BE</text><circle cx="2.5" cy="15" r=".6" fill="#fff"/><circle cx="14.5" cy="15" r=".6" fill="#fff"/></svg>
<div class="t" style="left:1791px;top:786px;font-size:13px;color:#000"><span style="font-size:.9em;letter-spacing:-.25em">デリン</span><span style="font-size:.9em;letter-spacing:-.08em">ジ</span><span style="font-size:.78em;letter-spacing:-.15em">ャ</span><span style="font-size:.9em;letter-spacing:-.08em">ー</span>.mp4</div>
<div class="t" style="left:2108px;top:786px;font-size:13px;color:#6d6d6d">2014/01/14 20:19</div>
<div class="t" style="left:2267px;top:786px;font-size:13px;color:#6d6d6d">MP4 <span style="font-size:.9em;letter-spacing:-.08em">フ</span><span style="font-size:.78em;letter-spacing:-.15em">ァ</span><span style="font-size:.9em;letter-spacing:-.25em">イ</span><span style="font-size:.9em;letter-spacing:-.08em">ル</span></div>
<div class="t" style="right:106px;top:786px;font-size:13px;color:#6d6d6d;text-align:right">12,234 KB</div>
<div class="t" style="left:2468px;top:786px;font-size:13px;color:#6d6d6d">00:04:01</div>
<!-- nav bottom -->
<div class="a" style="left:1565px;top:1078px;width:8px;height:8px;border-radius:50%;background:#3a9a3a"></div>
<div class="a" style="left:1569px;top:1081px;width:9px;height:8px;background:#1f3fbf;border:1px solid #666"></div>
<div class="t" style="left:1583px;top:1079px;font-size:13px;color:#111"><span style="font-size:.9em;letter-spacing:-.08em">ネ</span><span style="font-size:.78em;letter-spacing:-.15em">ッ</span><span style="font-size:.9em;letter-spacing:-.25em">トワー</span><span style="font-size:.9em;letter-spacing:-.08em">ク</span></div>
<div class="t" style="left:1556px;top:1160px;font-size:13px;color:#1e395b">24 <span style="font-size:.92em">個</span><span style="font-size:.9em;letter-spacing:-.08em">の</span><span style="font-size:.92em">項目</span></div>
<div class="a" style="left:1631px;top:1158px;width:1px;height:16px;background:#e6e6e6"></div>
<div class="t" style="left:1642px;top:1160px;font-size:13px;color:#1e395b">1 <span style="font-size:.92em">個</span><span style="font-size:.9em;letter-spacing:-.08em">の</span><span style="font-size:.92em">項目</span><span style="font-size:.9em;letter-spacing:-.08em">を</span><span style="font-size:.92em">選択</span>&nbsp; 14.9 GB</div>
<div class="a" style="left:1792px;top:1158px;width:1px;height:16px;background:#e6e6e6"></div>
<div class="t" style="left:1803px;top:1160px;font-size:13px;color:#1e395b"><span style="font-size:.92em">状況</span>:</div>
<div class="a" style="left:1834px;top:1159px;width:7px;height:7px;border-radius:50%;background:#5d9a6a"></div>
<div class="a" style="left:1840px;top:1159px;width:7px;height:7px;border-radius:50%;background:#6f87b0"></div>
<div class="a" style="left:1833px;top:1166px;width:15px;height:6px;border-radius:4px 4px 0 0;background:#5b8a74"></div>
<div class="t" style="left:1855px;top:1160px;font-size:13px;color:#1e395b"><span style="font-size:.92em">共有</span></div>
<div class="a" style="left:1542px;top:1178px;width:1018px;height:24px;background:#f0f0f0;border-top:1px solid #dcdcdc;border-bottom:1px solid #dcdcdc"></div>
<div class="t" style="left:1544px;top:1184px;font-size:13px;color:#000"><span style="font-size:.92em">項目</span><span style="font-size:.9em;letter-spacing:-.08em">の</span><span style="font-size:.92em">種類</span>: M2TS <span style="font-size:.9em;letter-spacing:-.08em">フ</span><span style="font-size:.78em;letter-spacing:-.15em">ァ</span><span style="font-size:.9em;letter-spacing:-.25em">イ</span><span style="font-size:.9em;letter-spacing:-.08em">ル</span>, <span style="font-size:.9em;letter-spacing:-.25em">サイ</span><span style="font-size:.9em;letter-spacing:-.08em">ズ</span>: 14.9 GB, <span style="font-size:.92em">長</span><span style="font-size:.9em;letter-spacing:-.08em">さ</span>: 00:45:51, <span style="font-size:.92em">利用可能性</span>: <span style="font-size:.9em;letter-spacing:-.25em">オフライン</span><span style="font-size:.9em;letter-spacing:-.08em">で</span><span style="font-size:.92em">利用可能</span></div>
<!-- ===== iSCSI explorer ===== -->
<div class="a" style="left:255px;top:10px;width:1491px;height:1065px;background:#e9e9e9;border:1px solid #d4d4d4"></div>
<!-- quick access -->
<svg style="left:263px;top:21px" width="18" height="13"><path d="M1.5 6 Q1.5 2.5 5 2.5 L12 2.5 Q15.5 2.5 15.5 6 L15.5 10 Q15.5 11.5 14 11.5 L3 11.5 Q1.5 11.5 1.5 10 Z" fill="#dcdcdc" stroke="#7a7a7a" stroke-width="1"/><path d="M2 7 L15 7" stroke="#aaa" stroke-width=".8"/><rect x="2.5" y="7.5" width="12" height="3.5" fill="#c4c4c4"/></svg>
<div class="a" style="left:274px;top:29px;width:2px;height:3px;background:#2c2"></div>
<div class="a" style="left:286px;top:19px;width:1px;height:12px;background:#9a9a9a"></div>
<div class="a" style="left:297px;top:18px;width:13px;height:16px;background:#fff;border:1px solid #888"></div>
<svg style="left:301px;top:24px" width="12" height="10"><path d="M1 5 L4 8 L10 1" fill="none" stroke="#e06a3a" stroke-width="2"/></svg>
<svg style="left:318px;top:17px" width="16" height="18"><path d="M2 2 L7 1 L7 16 L2 17 Z" fill="#f4dc8a" stroke="#d8b850" stroke-width=".6"/><path d="M7 1 L13 3 L13 16.5 L7 16 Z" fill="#fbeaa8" stroke="#d8b850" stroke-width=".6"/><path d="M8 3 L14 4.5 L14 17 L8 16.5 Z" fill="#f0d070" stroke="#c8a840" stroke-width=".6"/><rect x="12" y="11" width="1.5" height="3" fill="#3a9ae0"/></svg>
<div class="a" style="left:340px;top:24px;width:8px;height:1.5px;background:#111"></div>
<div class="a" style="left:340px;top:27px;width:0;height:0;border-left:4px solid transparent;border-right:4px solid transparent;border-top:4px solid #111"></div>
<div class="a" style="left:357px;top:19px;width:1px;height:12px;background:#9a9a9a"></div>
<div class="a" style="left:486px;top:15px;width:80px;height:26px;background:#c6efa6"></div>
<div class="t" style="left:491px;top:21px;font-size:13px;color:#444;letter-spacing:-.4px"><span style="font-size:.9em;letter-spacing:-.25em">ドライ</span><span style="font-size:.9em;letter-spacing:-.08em">ブ</span> <span style="font-size:.9em;letter-spacing:-.25em">ツー</span><span style="font-size:.9em;letter-spacing:-.08em">ル</span></div>
<div class="t" style="left:1068px;top:18px;font-size:15px;color:#222;letter-spacing:.6px">iSCSI (E:)</div>
<div class="a" style="left:1650px;top:23px;width:9px;height:2px;background:#111"></div>
<div class="a" style="left:1676px;top:17px;width:11px;height:9px;border:1px solid #111;border-top:2px solid #111"></div>
<div class="a" style="left:1694px;top:11px;width:45px;height:20px;background:#c7c7c7"></div>
<svg style="left:1710px;top:15px" width="12" height="12"><path d="M1.5 1.5 L10.5 10.5 M10.5 1.5 L1.5 10.5" stroke="#fff" stroke-width="1.6"/></svg>
<!-- inner -->
<div class="a" style="left:263px;top:41px;width:1475px;height:1026px;background:#fff"></div>
<div class="a" style="left:263px;top:41px;width:55px;height:24px;background:#1979ca"></div>
<div class="t" style="left:273px;top:47px;font-size:13px;color:#fff;letter-spacing:-.6px"><span style="font-size:.9em;letter-spacing:-.08em">フ</span><span style="font-size:.78em;letter-spacing:-.15em">ァ</span><span style="font-size:.9em;letter-spacing:-.25em">イ</span><span style="font-size:.9em;letter-spacing:-.08em">ル</span></div>
<div class="t" style="left:333px;top:47px;font-size:13px;color:#333"><span style="font-size:.9em;letter-spacing:-.25em">ホー</span><span style="font-size:.9em;letter-spacing:-.08em">ム</span></div>
<div class="t" style="left:392px;top:47px;font-size:13px;color:#333"><span style="font-size:.92em">共有</span></div>
<div class="t" style="left:445px;top:47px;font-size:13px;color:#333"><span style="font-size:.92em">表示</span></div>
<div class="a" style="left:486px;top:41px;width:80px;height:24px;border-left:1px solid #dadbdc;border-right:1px solid #dadbdc"></div>
<div class="t" style="left:514px;top:47px;font-size:13px;color:#333"><span style="font-size:.92em">管理</span></div>
<svg style="left:1699px;top:48px" width="12" height="10"><path d="M1 2 L6 7 L11 2" fill="none" stroke="#8a8a8a" stroke-width="1.5"/></svg>
<div class="a" style="left:1720px;top:46px;width:14px;height:14px;border-radius:50%;background:#1d77cc"></div>
<div class="t" style="left:1723px;top:47px;font-size:13px;color:#fff;font-weight:bold">?</div>
<div class="a" style="left:263px;top:65px;width:1475px;height:1px;background:#dadbdc"></div>
<!-- address row -->
<svg style="left:270px;top:70px" width="100" height="30">
 <circle cx="13" cy="14" r="8.5" fill="none" stroke="#6b6b6b" stroke-width="1.2"/>
 <path d="M8.5 14 L17.5 14 M12 10.5 L8.5 14 L12 17.5" fill="none" stroke="#6b6b6b" stroke-width="1.6"/>
 <circle cx="41" cy="14" r="8.5" fill="none" stroke="#cfcfcf" stroke-width="1.2"/>
 <path d="M36.5 14 L45.5 14 M42 10.5 L45.5 14 L42 17.5" fill="none" stroke="#cfcfcf" stroke-width="1.6"/>
 <path d="M62 13 L69 13 L65.5 17 Z" fill="#7a7a7a"/>
 <path d="M87 20 L87 8 M83 12 L87 8 L91 12" fill="none" stroke="#6b6b6b" stroke-width="1.6"/>
</svg>
<div class="a" style="left:371px;top:73px;width:1141px;height:22px;border:1px solid #d9d9d9"></div>
<div class="a" style="left:1487px;top:73px;width:1px;height:22px;background:#d9d9d9"></div>
<svg style="left:373px;top:80px" width="18" height="13"><path d="M1.5 6 Q1.5 2.5 5 2.5 L12 2.5 Q15.5 2.5 15.5 6 L15.5 10 Q15.5 11.5 14 11.5 L3 11.5 Q1.5 11.5 1.5 10 Z" fill="#dcdcdc" stroke="#7a7a7a" stroke-width="1"/><path d="M2 7 L15 7" stroke="#aaa" stroke-width=".8"/><rect x="2.5" y="7.5" width="12" height="3.5" fill="#c4c4c4"/></svg>
<div class="a" style="left:384px;top:88px;width:2px;height:3px;background:#2c2"></div>
<div class="a" style="left:398px;top:80px;width:0;height:0;border-top:4px solid transparent;border-bottom:4px solid transparent;border-left:4px solid #707070"></div>
<div class="t" style="left:411px;top:77px;font-size:13px;color:#111">PC</div>
<div class="a" style="left:436px;top:80px;width:0;height:0;border-top:4px solid transparent;border-bottom:4px solid transparent;border-left:4px solid #707070"></div>
<div class="t" style="left:449px;top:77px;font-size:13px;color:#111">iSCSI (E:)</div>
<svg style="left:1471px;top:79px" width="12" height="10"><path d="M1 2 L5.5 7 L10 2" fill="none" stroke="#555" stroke-width="1.6"/></svg>
<svg style="left:1492px;top:76px" width="16" height="16"><path d="M12 6 A5 5 0 1 0 12.5 10" fill="none" stroke="#707070" stroke-width="1.8"/><path d="M9 3 L13.5 3 L13.5 7.5 Z" fill="#707070"/></svg>
<div class="a" style="left:1524px;top:73px;width:202px;height:22px;border:1px solid #d9d9d9"></div>
<div class="t" style="left:1534px;top:77px;font-size:13px;color:#7b7b7b">iSCSI (E:)<span style="font-size:.9em;letter-spacing:-.08em">の</span><span style="font-size:.92em">検索</span></div>
<svg style="left:1704px;top:77px" width="14" height="14"><circle cx="8.5" cy="5.5" r="3.8" fill="none" stroke="#555" stroke-width="1.4"/><path d="M5.8 8.2 L1.5 12.5" stroke="#555" stroke-width="1.8"/></svg>
<!-- custom toolbar -->
<div class="a" style="left:263px;top:103px;width:1475px;height:30px;background:#f3f4f6;border-bottom:1px solid #e7e9ec"></div>
<svg style="left:1505px;top:104px" width="230" height="28">
 <path d="M8 2 L13 17 M17 2 L12 17" stroke="#667" stroke-width="1.8"/>
 <circle cx="9" cy="21" r="3.5" fill="none" stroke="#2a8be0" stroke-width="1.8"/>
 <circle cx="16" cy="21" r="3.5" fill="none" stroke="#2a8be0" stroke-width="1.8"/>
 <path d="M37 3 L45 3 L48 6 L48 18 L37 18 Z" fill="#fff" stroke="#888" stroke-width="1"/>
 <path d="M42 9 L50 9 L53 12 L53 24 L42 24 Z" fill="#fff" stroke="#888" stroke-width="1"/>
 <path d="M44 15 L51 15 M44 18 L51 18 M44 21 L51 21" stroke="#3a7ad0" stroke-width="1"/>
 <rect x="68" y="5" width="19" height="20" rx="1.5" fill="#fff" stroke="#a87a44" stroke-width="2.2"/>
 <path d="M71 10 L84 10 M71 13 L84 13 M71 16 L84 16 M71 19 L84 19 M71 22 L84 22" stroke="#9ab" stroke-width="0.8"/>
 <path d="M73 5 L77.5 1.5 L82 5" fill="#ddd" stroke="#555" stroke-width="1"/>
 <path d="M100 5 Q110 14 117 24 M120 5 Q108 13 101 23" fill="none" stroke="#dd2a20" stroke-width="3"/>
 <path d="M132 15 L139 23 L151 6" fill="none" stroke="#f07a3a" stroke-width="3.2" stroke-linecap="round"/>
 <rect x="162" y="10" width="21" height="13" fill="#fff" stroke="#999" stroke-width="1"/>
 <rect x="175" y="12" width="5" height="4" fill="#4ab0e0"/>
 <path d="M166 18 L178 18 M166 20 L176 20" stroke="#888" stroke-width="0.8"/>
 <path d="M191 4 L191 26" stroke="#555" stroke-width="1"/>
 <path d="M203 19 Q199 10 205 6 Q209 2 213 3 Q217 2 221 6 Q227 10 223 19 L218 25 L208 25 Z" fill="#f08a3a"/>
 <path d="M205 18 Q202 11 207 7 Q210 4.5 213 5 Q216 4.5 219 7 Q224 11 221 18 L217 23 L209 23 Z" fill="#36d0e0"/>
 <path d="M208 21 Q213 14 218 21 M206 17 Q213 8 220 17" fill="none" stroke="#1a90c0" stroke-width="1.2"/>
 <path d="M213 6 L213 23 M208 8 L210 22 M218 8 L216 22" stroke="#2ab0d0" stroke-width="0.8"/>
</svg>
<!-- nav pane -->
<div class="a" style="left:472px;top:133px;width:1px;height:887px;background:#f0f0f0"></div>
<svg style="left:282px;top:143px" width="18" height="18"><defs><radialGradient id="st" cx=".5" cy=".45" r=".55"><stop offset="0" stop-color="#fff6b0"/><stop offset=".6" stop-color="#fcc83a"/><stop offset="1" stop-color="#f08a20"/></radialGradient></defs><path d="M8.5 1 L11 6.5 L17 7 L12.5 11 L14 17 L8.5 13.8 L3 17 L4.5 11 L0 7 L6 6.5 Z" fill="url(#st)" stroke="#e8801a" stroke-width="0.8"/></svg>
<div class="t" style="left:304px;top:146px;font-size:13px;color:#111"><span style="font-size:.9em;letter-spacing:-.08em">お</span><span style="font-size:.92em">気</span><span style="font-size:.9em;letter-spacing:-.08em">に</span><span style="font-size:.92em">入</span><span style="font-size:.9em;letter-spacing:-.08em">り</span></div>
<svg style="left:293px;top:165px" width="16" height="16"><rect x=".5" y=".5" width="15" height="15" rx="3" fill="#fff" stroke="#c8c8c8"/><g transform="translate(8 8)"><ellipse rx="1.6" ry="3.8" cy="-2.6" fill="#f8b020" opacity=".85"/><ellipse rx="1.6" ry="3.8" cy="-2.6" fill="#f03a3a" opacity=".8" transform="rotate(45)"/><ellipse rx="1.6" ry="3.8" cy="-2.6" fill="#c03ac8" opacity=".8" transform="rotate(90)"/><ellipse rx="1.6" ry="3.8" cy="-2.6" fill="#3a6af0" opacity=".8" transform="rotate(135)"/><ellipse rx="1.6" ry="3.8" cy="-2.6" fill="#3ab8f0" opacity=".8" transform="rotate(180)"/><ellipse rx="1.6" ry="3.8" cy="-2.6" fill="#3ac85a" opacity=".8" transform="rotate(225)"/><ellipse rx="1.6" ry="3.8" cy="-2.6" fill="#a8d83a" opacity=".8" transform="rotate(270)"/><ellipse rx="1.6" ry="3.8" cy="-2.6" fill="#f8e83a" opacity=".8" transform="rotate(315)"/></g></svg>
<div class="t" style="left:314px;top:167px;font-size:13px;color:#111">iCloud <span style="font-size:.9em;letter-spacing:-.08em">フ</span><span style="font-size:.78em;letter-spacing:-.15em">ォ</span><span style="font-size:.9em;letter-spacing:-.08em">ト</span></div>
<svg style="left:293px;top:186px" width="16" height="17"><path d="M2 2 L7 1 L7 15 L2 16 Z" fill="#f4dc8a" stroke="#d8b850" stroke-width=".6"/><path d="M7 1 L13 3 L13 15.5 L7 15 Z" fill="#fbeaa8" stroke="#d8b850" stroke-width=".6"/><path d="M8 3 L14 4.5 L14 16 L8 15.5 Z" fill="#f0d070" stroke="#c8a840" stroke-width=".6"/><rect x="12" y="10" width="1.5" height="3" fill="#3a9ae0"/></svg>
<svg style="left:299px;top:192px" width="11" height="11"><path d="M3.5 0.5 L7.5 0.5 L7.5 5 L10.5 5 L5.5 10.5 L0.5 5 L3.5 5 Z" fill="#3a9ae8" stroke="#1a6ac0" stroke-width=".8"/></svg>
<div class="t" style="left:314px;top:188px;font-size:13px;color:#111"><span style="font-size:.9em;letter-spacing:-.25em">ダウンロー</span><span style="font-size:.9em;letter-spacing:-.08em">ド</span></div>
<svg style="left:293px;top:209px" width="16" height="13"><rect x=".5" y=".5" width="15" height="12" fill="#3a5aa0"/><rect x="1.5" y="1.5" width="13" height="9" fill="url(#dk)"/><defs><linearGradient id="dk" x1="0" y1="0" x2="1" y2="1"><stop offset="0" stop-color="#2a4ab8"/><stop offset=".5" stop-color="#6a9af0"/><stop offset="1" stop-color="#2a4ab8"/></linearGradient></defs></svg>
<div class="t" style="left:314px;top:209px;font-size:13px;color:#111"><span style="font-size:.9em;letter-spacing:-.25em">デスク</span><span style="font-size:.9em;letter-spacing:-.08em">ト</span><span style="font-size:.78em;letter-spacing:-.15em">ッ</span><span style="font-size:.9em;letter-spacing:-.08em">プ</span></div>
<svg style="left:293px;top:228px" width="16" height="16"><circle cx="4" cy="4" r="3.2" fill="#fff" stroke="#999" stroke-width=".8"/><path d="M4 2 L4 4 L5.5 4" stroke="#666" stroke-width=".7" fill="none"/><rect x="5" y="3" width="9" height="8" fill="#f4f8fc" stroke="#9aa" stroke-width=".8"/><rect x="7" y="5" width="4" height="3" fill="#6ab0e0"/><rect x="2" y="11" width="13" height="4" fill="#c8c8c8" stroke="#888" stroke-width=".6"/></svg>
<div class="t" style="left:314px;top:230px;font-size:13px;color:#111"><span style="font-size:.92em">最近表示</span><span style="font-size:.9em;letter-spacing:-.25em">し</span><span style="font-size:.9em;letter-spacing:-.08em">た</span><span style="font-size:.92em">場所</span></div>
<svg style="left:293px;top:249px" width="16" height="17"><path d="M2 2 L7 1 L7 15 L2 16 Z" fill="#f4dc8a" stroke="#d8b850" stroke-width=".6"/><path d="M7 1 L13 3 L13 15.5 L7 15 Z" fill="#fbeaa8" stroke="#d8b850" stroke-width=".6"/><path d="M8 3 L14 4.5 L14 16 L8 15.5 Z" fill="#f0d070" stroke="#c8a840" stroke-width=".6"/><rect x="12" y="10" width="1.5" height="3" fill="#3a9ae0"/></svg>
<div class="t" style="left:314px;top:251px;font-size:13px;color:#111">ownCloud</div>
<svg style="left:282px;top:291px" width="18" height="13"><path d="M1 12 Q0 8 4 8 Q5 3 10 3 Q14 3 15 7 Q18 8 17 12 Z" fill="#1f5ec4"/><path d="M4 8 Q7 6 9 9 M10 3 Q8 6 10 8" stroke="#fff" stroke-width="1" fill="none"/></svg>
<div class="t" style="left:304px;top:293px;font-size:13px;color:#111">SkyDrive</div>
<!-- headers -->
<div class="t" style="left:491px;top:139px;font-size:13px;color:#4c607a"><span style="font-size:.92em">名前</span></div>
<div class="a" style="left:611px;top:133px;width:0;height:0;border-left:4px solid transparent;border-right:4px solid transparent;border-bottom:4px solid #569de5"></div>
<div class="a" style="left:745px;top:133px;width:1px;height:24px;background:#e8eef5"></div>
<div class="t" style="left:752px;top:139px;font-size:13px;color:#4c607a"><span style="font-size:.92em">更新日時</span></div>
<div class="a" style="left:865px;top:133px;width:1px;height:24px;background:#e8eef5"></div>
<div class="t" style="left:872px;top:139px;font-size:13px;color:#4c607a"><span style="font-size:.92em">種類</span></div>
<div class="a" style="left:985px;top:133px;width:1px;height:24px;background:#e8eef5"></div>
<div class="t" style="left:991px;top:139px;font-size:13px;color:#4c607a"><span style="font-size:.9em;letter-spacing:-.25em">サイ</span><span style="font-size:.9em;letter-spacing:-.08em">ズ</span></div>
<div class="a" style="left:1065px;top:133px;width:1px;height:24px;background:#e8eef5"></div>
<div class="t" style="left:1048px;top:174px;font-size:13px;color:#6d6d6d"><span style="font-size:.9em;letter-spacing:-.25em">この</span><span style="font-size:.9em;letter-spacing:-.08em">フ</span><span style="font-size:.78em;letter-spacing:-.15em">ォ</span><span style="font-size:.9em;letter-spacing:-.25em">ルダー</span><span style="font-size:.9em;letter-spacing:-.08em">は</span><span style="font-size:.92em">空</span><span style="font-size:.9em;letter-spacing:-.25em">で</span><span style="font-size:.9em;letter-spacing:-.08em">す</span>。</div>
<!-- status -->
<div class="t" style="left:277px;top:1025px;font-size:13px;color:#1e395b">0 <span style="font-size:.92em">個</span><span style="font-size:.9em;letter-spacing:-.08em">の</span><span style="font-size:.92em">項目</span></div>
<div class="a" style="left:346px;top:1023px;width:1px;height:16px;background:#eee"></div>
<div class="a" style="left:1690px;top:1020px;width:21px;height:22px;background:#cce8fa;border:1px solid #5aaef0"></div>
<div class="a" style="left:1694px;top:1024px;width:3px;height:3px;border:1px solid #888"></div><div class="a" style="left:1694px;top:1029px;width:3px;height:3px;border:1px solid #c44"></div><div class="a" style="left:1694px;top:1034px;width:3px;height:3px;border:1px solid #888"></div><div class="a" style="left:1699px;top:1025px;width:9px;height:11px;background:repeating-linear-gradient(#556 0 1px,transparent 1px 5px)"></div>
<div class="a" style="left:1716px;top:1024px;width:14px;height:12px;border:1px solid #999;background:#fff;padding:1px"><div style="width:100%;height:100%;background:linear-gradient(#e8f0f8 30%,#3a7a8a 60%,#1a3a4a)"></div></div>
<div class="a" style="left:263px;top:1043px;width:1475px;height:25px;background:#f0f0f0;border-top:1px solid #dcdcdc;border-bottom:1px solid #dcdcdc"></div>
<div class="t" style="left:265px;top:1049px;font-size:13px;color:#000">0 <span style="font-size:.92em">個</span><span style="font-size:.9em;letter-spacing:-.08em">の</span><span style="font-size:.92em">項目</span> (<span style="font-size:.92em">空</span><span style="font-size:.9em;letter-spacing:-.25em">き</span><span style="font-size:.9em;letter-spacing:-.08em">デ</span><span style="font-size:.78em;letter-spacing:-.15em">ィ</span><span style="font-size:.9em;letter-spacing:-.25em">ス</span><span style="font-size:.9em;letter-spacing:-.08em">ク</span><span style="font-size:.92em">領域</span>: 499 GB)</div>
<div class="a" style="left:1465px;top:1046px;width:1px;height:18px;background:#dcdcdc"></div>
<div class="a" style="left:1563px;top:1046px;width:1px;height:18px;background:#dcdcdc"></div>
<div class="a" style="left:1567px;top:1050px;width:2px;height:9px;background:#999"></div>
<div class="a" style="left:1570px;top:1048px;width:12px;height:9px;background:linear-gradient(135deg,#1a3fd0,#8ab0ff);border:1px solid #666"></div>
<div class="a" style="left:1573px;top:1058px;width:6px;height:2px;background:#888"></div>
<div class="t" style="left:1586px;top:1049px;font-size:13px;color:#000"><span style="font-size:.9em;letter-spacing:-.25em">コン</span><span style="font-size:.9em;letter-spacing:-.08em">ピ</span><span style="font-size:.78em;letter-spacing:-.15em">ュ</span><span style="font-size:.9em;letter-spacing:-.25em">ータ</span><span style="font-size:.9em;letter-spacing:-.08em">ー</span></div>
<!-- ===== TCP Monitor Plus ===== -->
<div class="a" style="left:57px;top:309px;width:1005px;height:690px;background:#ebebeb;border:1px solid #cdcdcd"></div>
<div class="a" style="left:67px;top:316px;width:16px;height:16px;border:1px solid #555;border-radius:2px;background:#ddd;padding:1px"><div style="width:100%;height:100%;background:linear-gradient(170deg,#2f6ae0 0 35%,#f03030 35% 62%,#30a040 62%)"></div></div>
<div class="t" style="left:499px;top:318px;font-size:15px;color:#222">TCP Monitor Plus</div>
<div class="a" style="left:965px;top:322px;width:9px;height:2px;background:#111"></div>
<div class="a" style="left:992px;top:316px;width:11px;height:9px;border:1px solid #111;border-top:2px solid #111"></div>
<div class="a" style="left:1010px;top:310px;width:44px;height:20px;background:#c7c7c7"></div>
<svg style="left:1026px;top:314px" width="12" height="12"><path d="M1.5 1.5 L10.5 10.5 M10.5 1.5 L1.5 10.5" stroke="#fff" stroke-width="1.6"/></svg>
<!-- client frame -->
<div class="a" style="left:65px;top:340px;width:989px;height:651px;background:#f0f0f0;border-top:1px solid #a0a0a0;border-left:1px solid #a0a0a0;border-right:1px solid #fff;border-bottom:1px solid #fff"></div>
<div class="a" style="left:66px;top:341px;width:987px;height:649px;border-top:1px solid #fff;border-left:1px solid #fff;border-right:1px solid #e3e3e3;border-bottom:1px solid #e3e3e3"></div>
<!-- tab page border -->
<div class="a" style="left:67px;top:361px;width:984px;height:627px;border:1px solid #d9d9d9;border-right:1px solid #a9a9a9;border-bottom:1px solid #a9a9a9;background:#f0f0f0"></div>
<!-- tabs -->

<div id="tabs"></div>
<div class="a" style="left:67px;top:342px;width:114px;height:21px;background:#fff;border:1px solid #d9d9d9;border-bottom:none"></div>
<div class="t" style="left:72px;top:346px;font-size:12px;color:#000"><span style="font-size:.92em;letter-spacing:-.05em">トラ</span><span style="font-size:.92em;letter-spacing:-.08em">フ</span><span style="font-size:.86em;letter-spacing:-.32em">ィ</span><span style="font-size:.86em;letter-spacing:-.15em">ッ</span><span style="font-size:.92em;letter-spacing:-.05em">クモニタ</span><span style="font-size:.92em;letter-spacing:-.08em">ー</span></div>
<div class="a" style="left:181px;top:344px;width:86px;height:18px;background:#f0f0f0;border:1px solid #d9d9d9;border-bottom:none"></div>
<div class="t" style="left:185px;top:347px;font-size:12px;color:#000">IP監視<span style="font-size:.92em;letter-spacing:-.05em">モニタ</span><span style="font-size:.92em;letter-spacing:-.08em">ー</span></div>
<div class="a" style="left:267px;top:344px;width:104px;height:18px;background:#f0f0f0;border:1px solid #d9d9d9;border-bottom:none"></div>
<div class="t" style="left:273px;top:347px;font-size:12px;color:#000"><span style="font-size:.92em;letter-spacing:-.08em">セ</span><span style="font-size:.86em;letter-spacing:-.15em">ッ</span><span style="font-size:.92em;letter-spacing:-.08em">シ</span><span style="font-size:.86em;letter-spacing:-.15em">ョ</span><span style="font-size:.92em;letter-spacing:-.05em">ンモニタ</span><span style="font-size:.92em;letter-spacing:-.08em">ー</span></div>
<div class="a" style="left:371px;top:344px;width:103px;height:18px;background:#f0f0f0;border:1px solid #d9d9d9;border-bottom:none"></div>
<div class="t" style="left:377px;top:347px;font-size:12px;color:#000"><span style="font-size:.92em;letter-spacing:-.05em">パ</span><span style="font-size:.92em;letter-spacing:-.08em">ケ</span><span style="font-size:.86em;letter-spacing:-.15em">ッ</span><span style="font-size:.92em;letter-spacing:-.05em">ト</span><span style="font-size:.92em;letter-spacing:-.08em">フ</span><span style="font-size:.86em;letter-spacing:-.15em">ィ</span><span style="font-size:.92em;letter-spacing:-.05em">ルタ</span><span style="font-size:.92em;letter-spacing:-.08em">ー</span></div>
<div class="a" style="left:474px;top:344px;width:46px;height:18px;background:#f0f0f0;border:1px solid #d9d9d9;border-bottom:none"></div>
<div class="t" style="left:480px;top:347px;font-size:12px;color:#000">IF詳細</div>
<div class="a" style="left:520px;top:344px;width:48px;height:18px;background:#f0f0f0;border:1px solid #d9d9d9;border-bottom:none"></div>
<div class="t" style="left:526px;top:347px;font-size:12px;color:#000">統計値</div>
<div class="a" style="left:568px;top:344px;width:72px;height:18px;background:#f0f0f0;border:1px solid #d9d9d9;border-bottom:none"></div>
<div class="t" style="left:575px;top:347px;font-size:12px;color:#000">NSLOOKUP</div>
<div class="a" style="left:640px;top:344px;width:63px;height:18px;background:#f0f0f0;border:1px solid #d9d9d9;border-bottom:none"></div>
<div class="t" style="left:646px;top:347px;font-size:12px;color:#000">NETSTAT</div>
<div class="a" style="left:703px;top:344px;width:45px;height:18px;background:#f0f0f0;border:1px solid #d9d9d9;border-bottom:none"></div>
<div class="t" style="left:709px;top:347px;font-size:12px;color:#000">WHOIS</div>

<!-- combo -->
<div class="a" style="left:73px;top:368px;width:485px;height:20px;background:linear-gradient(#f2f2f2,#e6e6e6);border:1px solid #acacac"></div>
<div class="t" style="left:76px;top:372px;font-size:12px;color:#000">Intel(R) Ethernet Connection I217-V</div>
<svg style="left:543px;top:374px" width="10" height="8"><path d="M1 1.5 L5 5.5 L9 1.5" fill="none" stroke="#333" stroke-width="1.6"/></svg>
<div class="a" style="left:1002px;top:370px;width:16px;height:14px;border:1px solid #222;background:repeating-linear-gradient(#fff 0 2px,#333 2px 3px)"></div>
<svg style="left:1024px;top:370px" width="18" height="14"><path d="M1 7 L8 7 M8 3 L8 11 M8 4 L15 3 L15 11 L8 10 M11 3.5 L11 10.5" fill="none" stroke="#111" stroke-width="1.4"/></svg>
<!-- graph black area -->
<div class="a" style="left:73px;top:392px;width:973px;height:591px;border-top:1px solid #a0a0a0;border-left:1px solid #a0a0a0;border-right:1px solid #fff;border-bottom:1px solid #fff"></div>
<div class="a" style="left:74px;top:393px;width:971px;height:589px;border-top:1px solid #696969;border-left:1px solid #696969;border-right:1px solid #e3e3e3;border-bottom:1px solid #e3e3e3"></div>
<div class="a" style="left:75px;top:394px;width:969px;height:587px;background-color:#000;background-image:linear-gradient(90deg,#0000e6 1px,transparent 1px),linear-gradient(#0000e6 1px,transparent 1px);background-size:28px 100%,100% 21px;background-position:26px 0,0 19px"></div>
<!-- info box 1 -->
<div class="a" style="left:97px;top:416px;width:324px;height:124px;background:#000;border:2px solid #fff"></div>
<div class="a" style="left:433px;top:416px;width:324px;height:124px;background:#000;border:2px solid #fff"></div>
<div id="info" style="font-family:'Liberation Mono',monospace;color:#fff">
<div class="t" style="left:107px;top:427px;font-size:12px;letter-spacing:-1.2px;line-height:12px">[ Intel(R) Ethernet Connection I217-V ]</div>
<div class="t" style="left:107px;top:451px;font-size:12px;line-height:12px">最大転送速度<br>オペレーショナル状態</div>
<div class="t" style="left:107px;top:487px;font-size:12px;line-height:12px">ユニキャスト・送信パケット<br>非ユニキャスト送信パケット<br>ユニキャスト・受信パケット<br>非ユニキャスト受信パケット</div>
<div class="t" style="left:281px;top:451px;font-size:12px;letter-spacing:-1.2px;line-height:12px;white-space:pre">1000,000,000 bps
 OPERATIONAL</div>
<div class="t" style="left:287px;top:487px;font-size:12px;letter-spacing:-1.2px;line-height:12px;white-space:pre"> 13,037,437 packet
      4,150 packet
 30,242,774 packet
     20,359 packet</div>
<div class="t" style="left:443px;top:427px;font-size:12px;line-height:12px">キャプチャ時間</div>
<div class="t" style="left:443px;top:451px;font-size:12px;line-height:12px">総送信量 (累計)<br>総受信量 (累計)</div>
<div class="t" style="left:443px;top:487px;font-size:12px;line-height:12px">平均送信速度<br>平均受信速度</div>
<div class="t" style="left:443px;top:523px;font-size:12px;line-height:12px">グラフスケール</div>
<div class="t" style="left:593px;top:427px;font-size:12px;letter-spacing:-1.2px;line-height:12px">0<span style="font-size:12px;letter-spacing:0">時間</span> 07<span style="font-size:12px;letter-spacing:0">分</span> 58<span style="font-size:12px;letter-spacing:0">秒</span></div>
<div class="t" style="left:575px;top:451px;font-size:12px;letter-spacing:-1.2px;line-height:12px;white-space:pre">   8.742 GB (   3.529 TB)
  22.885 GB (   3.488 TB)</div>
<div class="t" style="left:575px;top:487px;font-size:12px;letter-spacing:-1.2px;line-height:12px;white-space:pre">19176.91 KB/s
50197.26 KB/s</div>
<div class="t" style="left:581px;top:523px;font-size:12px;letter-spacing:-1.2px;line-height:12px;white-space:pre">1/16384 <span style="font-size:12px;letter-spacing:0">倍　(自動)</span></div>
</div>
<!-- blue graph box -->
<div class="a" style="left:97px;top:552px;width:925px;height:407px;border:2px solid #fff;background-color:#2130a2;background-image:linear-gradient(90deg,#4a5fe6 1px,transparent 1px),linear-gradient(90deg,#3344b8 1px,transparent 1px);background-size:200px 100%,40px 100%;background-position:200px 0,0 0"></div>
<div class="a" style="left:99px;top:554px;width:1px;height:403px;background:#4a5fe6"></div>
<div class="a" style="left:103px;top:744px;width:914px;height:1px;background:#ffb830"></div>
<div class="a" style="left:103px;top:745px;width:914px;height:1px;background:#300010"></div>
<div class="a" style="left:103px;top:752px;width:914px;height:1px;background:#ff4030"></div>
<div class="a" style="left:103px;top:753px;width:914px;height:1px;background:#300010"></div>
<div class="a" style="left:103px;top:754px;width:913px;height:198px;background:repeating-linear-gradient(90deg,#ff0000 0 1px,#2232a2 1px 2px)"></div>
<svg style="left:103px;top:752px" width="914" height="12"><path d="M0 0 L0.0 1.8 L47.0 2.9 L67.0 4.0 L91.4 3.6 L120.3 1.8 L135.9 2.4 L147.0 4.7 L169.2 5.3 L189.2 6.9 L191.4 4.7 L222.6 3.6 L229.2 5.8 L235.9 4.0 L255.9 1.8 L302.6 4.7 L324.8 6.9 L349.2 8.0 L353.7 4.7 L369.2 2.4 L391.4 3.6 L427.0 3.1 L477.0 2.4 L510.3 4.7 L517.0 6.9 L552.6 4.7 L601.4 2.4 L628.1 6.9 L677.0 8.4 L721.4 4.7 L743.7 2.4 L854.8 5.3 L877.0 3.1 L912.6 3.1 L914.0 0.0 L914 0 Z" fill="#2130a2"/><path d="M0 0.5 L914 0.5" stroke="#ff4030" stroke-width="1"/><path d="M0 1.5 L914 1.5" stroke="#300010" stroke-width="1"/></svg>
<div class="a" style="left:103px;top:952px;width:914px;height:1px;background:#40ff40"></div>
<div class="a" style="left:103px;top:953px;width:914px;height:1px;background:#003000"></div>
<div class="t" style="left:110px;top:565px;font-size:14px;line-height:14px;color:#fff;font-family:'Liberation Mono',monospace;font-weight:bold;letter-spacing:-1.4px;white-space:pre"><span style="letter-spacing:0">送信速度</span>: 100.729 MB/s  -  <span style="letter-spacing:0">受信速度</span>:   0.713 MB/s</div>
<div class="t" style="left:655px;top:729px;font-size:16px;line-height:16px;color:#ffb830;font-family:'Liberation Mono',monospace;font-weight:bold;letter-spacing:-1.6px;white-space:pre;text-shadow:1px 1px 0 #200"><span style="letter-spacing:0">送信</span>MAX: 836.771 Mbps</div>
<div class="t" style="left:832px;top:736px;font-size:16px;line-height:16px;color:#ff4030;font-family:'Liberation Mono',monospace;font-weight:bold;letter-spacing:-1.6px;white-space:pre;text-shadow:1px 1px 0 #200"><span style="letter-spacing:0">送信平均</span>: 100.729 MB/s</div>
<div class="a" style="left:820px;top:744px;width:197px;height:1px;background:#ffb830"></div>
<div class="t" style="left:832px;top:937px;font-size:16px;line-height:16px;color:#40ff40;font-family:'Liberation Mono',monospace;font-weight:bold;letter-spacing:-1.6px;white-space:pre;text-shadow:1px 1px 0 #020"><span style="letter-spacing:0">受信平均</span>:   0.713 MB/s</div>
<!-- ===== Copy dialog ===== -->
<div class="a" style="left:1081px;top:437px;width:463px;height:293px;background:#cf8c6e;border:1px solid #b9785a"></div>
<div class="a" style="left:1091px;top:447px;width:13px;height:9px;background:linear-gradient(#9c9,#3a3);border:1px solid #666"></div>
<svg style="left:1096px;top:451px" width="12" height="10"><path d="M1 5 L8 5 M5 2 L9 5 L5 8" fill="none" stroke="#eee" stroke-width="2"/></svg>
<div class="t" style="left:1278px;top:446px;font-size:15px;color:#333">49% <span style="font-size:.92em">完了</span></div>
<div class="a" style="left:1448px;top:450px;width:8px;height:2px;background:#222"></div>
<div class="a" style="left:1474px;top:444px;width:10px;height:8px;border:1px solid #444;border-top:2px solid #444"></div>
<div class="a" style="left:1492px;top:438px;width:45px;height:20px;background:#c75050"></div>
<svg style="left:1508px;top:442px" width="12" height="12"><path d="M1.5 1.5 L10.5 10.5 M10.5 1.5 L1.5 10.5" stroke="#fff" stroke-width="1.8"/></svg>
<div class="a" style="left:1089px;top:468px;width:447px;height:254px;background:#fff"></div>
<div class="t" style="left:1115px;top:481px;font-size:13px;color:#111">1 <span style="font-size:.92em">個</span><span style="font-size:.9em;letter-spacing:-.08em">の</span><span style="font-size:.92em">項目</span><span style="font-size:.9em;letter-spacing:-.25em">をコピ</span><span style="font-size:.9em;letter-spacing:-.08em">ー</span><span style="font-size:.92em">中</span>: <span style="color:#1e6fc0"><span style="font-size:.9em;letter-spacing:-.25em">ビデ</span><span style="font-size:.9em;letter-spacing:-.08em">オ</span></span> <span style="font-size:.9em;letter-spacing:-.25em">か</span><span style="font-size:.9em;letter-spacing:-.08em">ら</span> <span style="color:#1e6fc0">iSCSI (E:)</span></div>
<div class="t" style="left:1115px;top:499px;font-size:17.5px;color:#111;letter-spacing:.3px">49% <span style="font-size:.92em">完了</span></div>
<div class="a" style="left:1445px;top:500px;width:19px;height:18px;border:1px dotted #222"></div>
<div class="a" style="left:1450px;top:505px;width:2px;height:8px;background:#111"></div>
<div class="a" style="left:1456px;top:505px;width:2px;height:8px;background:#111"></div>
<svg style="left:1495px;top:504px" width="11" height="11"><path d="M1.5 1.5 L9.5 9.5 M9.5 1.5 L1.5 9.5" stroke="#111" stroke-width="2"/></svg>
<div class="a" style="left:1115px;top:526px;width:395px;height:80px;border:1px solid #bcbcbc;background:#fff"></div>
<svg style="left:1117px;top:528px" width="391" height="75"><rect x="0" y="0" width="195" height="75" fill="#a6e390"/><path d="M38.5 0 L38.5 75" stroke="#8fd47c" stroke-width="1"/><path d="M77.7 0 L77.7 75" stroke="#8fd47c" stroke-width="1"/><path d="M116.9 0 L116.9 75" stroke="#8fd47c" stroke-width="1"/><path d="M156.1 0 L156.1 75" stroke="#8fd47c" stroke-width="1"/><path d="M0 39.5 L195 39.5" stroke="#93d980" stroke-width="1"/><path d="M0 46.5 L195 46.5" stroke="#93d980" stroke-width="1"/><path d="M0 54.5 L195 54.5" stroke="#93d980" stroke-width="1"/><path d="M0 61.5 L195 61.5" stroke="#93d980" stroke-width="1"/><path d="M0 69.5 L195 69.5" stroke="#93d980" stroke-width="1"/><path d="M195.3 0 L195.3 75" stroke="#c9f0c9" stroke-width="1"/><path d="M234.5 0 L234.5 75" stroke="#c9f0c9" stroke-width="1"/><path d="M273.7 0 L273.7 75" stroke="#c9f0c9" stroke-width="1"/><path d="M312.9 0 L312.9 75" stroke="#c9f0c9" stroke-width="1"/><path d="M352.1 0 L352.1 75" stroke="#c9f0c9" stroke-width="1"/><path d="M391.3 0 L391.3 75" stroke="#c9f0c9" stroke-width="1"/><path d="M195 39.5 L391 39.5" stroke="#c9f0c9" stroke-width="1"/><path d="M195 46.5 L391 46.5" stroke="#c9f0c9" stroke-width="1"/><path d="M195 54.5 L391 54.5" stroke="#c9f0c9" stroke-width="1"/><path d="M195 61.5 L391 61.5" stroke="#c9f0c9" stroke-width="1"/><path d="M195 69.5 L391 69.5" stroke="#c9f0c9" stroke-width="1"/></svg>
<svg style="left:1117px;top:528px" width="391" height="76"><path d="M0 38 L18 38 L22 37 L40 37.5 L60 37 L75 37.5 L80 39 Q85 48 90 62 Q94 72 98 74.5 L0 74.5 Z" fill="#05a920"/><path d="M0 74.5 L391 74.5" stroke="#111" stroke-width="1.5"/></svg>
<div class="t" style="left:1412px;top:586px;font-size:13px;color:#111"><span style="font-size:.92em">速度</span>: 96.2 MB/s</div>
<div class="t" style="left:1115px;top:617px;font-size:13px;line-height:16px;color:#111"><span style="font-size:.92em">名前</span>: BD <span style="font-size:.92em">言</span><span style="font-size:.9em;letter-spacing:-.08em">の</span><span style="font-size:.92em">葉</span><span style="font-size:.9em;letter-spacing:-.08em">の</span><span style="font-size:.92em">庭</span>.m2ts<br><span style="font-size:.92em">残</span><span style="font-size:.9em;letter-spacing:-.08em">り</span><span style="font-size:.92em">時間</span>: <span style="font-size:.92em">約</span> 1 <span style="font-size:.92em">分</span> 30 <span style="font-size:.92em">秒</span><br><span style="font-size:.92em">残</span><span style="font-size:.9em;letter-spacing:-.25em">り</span><span style="font-size:.9em;letter-spacing:-.08em">の</span><span style="font-size:.92em">項目</span>: 1 (7.50 GB)</div>
<div class="a" style="left:1089px;top:678px;width:447px;height:1px;background:#e3e3e3"></div>
<div class="a" style="left:1115px;top:691px;width:19px;height:19px;border:1px solid #333;border-radius:50%"></div>
<svg style="left:1119px;top:696px" width="11" height="8"><path d="M2 6 L5.5 2.5 L9 6" fill="none" stroke="#111" stroke-width="1.8"/></svg>
<div class="t" style="left:1139px;top:694px;font-size:13px;color:#111"><span style="font-size:.92em">詳細情報</span><span style="font-size:.9em;letter-spacing:-.08em">の</span><span style="font-size:.92em">非表示</span></div>
<!-- ===== Taskbar ===== -->
<div class="a" style="left:0;top:1400px;width:2560px;height:40px;background:linear-gradient(90deg,#62483a 0,#6a4c3e 35px,#985c42 36px,#a86c52 90px,#b8806a 200px,#bd8a74 400px,#c49580 520px,#b98c7a 700px,#c0907c 900px,#b58a78 1000px,#c29684 1150px,#b88c7a 1300px,#ae8474 1500px,#a87a66 1640px,#b87a62 1700px,#c49078 1800px,#c89a82 1950px,#a8948e 2020px,#b09898 2080px,#c49a84 2180px,#b48a74 2300px,#9a7464 2420px,#a88070 2470px,#b08a7a 2560px)"></div>
<div class="a" style="left:0;top:1400px;width:2560px;height:1px;background:#6b4a40"></div>
<div class="a" style="left:0;top:1401px;width:2560px;height:8px;background:rgba(230,215,210,0.35)"></div>
<div class="a" style="left:114px;top:1401px;width:58px;height:39px;background:rgba(255,255,255,0.2);border:1px solid rgba(255,255,255,0.42)"></div>
<div class="a" style="left:176px;top:1401px;width:50px;height:39px;background:rgba(255,255,255,0.2);border:1px solid rgba(255,255,255,0.42)"></div>
<div class="a" style="left:424px;top:1401px;width:58px;height:39px;background:rgba(255,255,255,0.2);border:1px solid rgba(255,255,255,0.42)"></div>
<div class="a" style="left:1229px;top:1401px;width:59px;height:39px;background:rgba(255,255,255,0.2);border:1px solid rgba(255,255,255,0.42)"></div>
<div class="a" style="left:1416px;top:1401px;width:58px;height:39px;background:rgba(255,255,255,0.2);border:1px solid rgba(255,255,255,0.42)"></div>
<div class="a" style="left:1477px;top:1401px;width:59px;height:39px;background:rgba(255,255,255,0.2);border:1px solid rgba(255,255,255,0.42)"></div>
<div class="a" style="left:1539px;top:1401px;width:58px;height:39px;background:rgba(255,255,255,0.2);border:1px solid rgba(255,255,255,0.42)"></div>
<div class="a" style="left:177px;top:1402px;width:24px;height:37px;background:linear-gradient(#8ae68a,#5ac85a);opacity:.75"></div>
<div class="a" style="left:228px;top:1401px;width:2px;height:39px;background:rgba(255,255,255,0.6)"></div><div class="a" style="left:232px;top:1401px;width:2px;height:39px;background:rgba(255,255,255,0.6)"></div>
<svg style="left:10px;top:1407px" width="28" height="26"><path d="M0 4 L10 2.6 L10 12 L0 12 Z M12 2.3 L26 0.5 L26 12 L12 12 Z M0 14 L10 14 L10 23.4 L0 22 Z M12 14 L26 14 L26 25.5 L12 23.7 Z" fill="#fff"/></svg>
<svg style="left:64px;top:1403px" width="34" height="34"><path d="M8 18 L27 18 Q27 8 17 8 Q7 8 7 18 Q7 28 17 28 Q24 28 27 22 L20 22 Q18.5 24.5 16.5 24.5 Q12 24.5 12 21 L27 21 Z" fill="#33a6ee" stroke="#1a6ac0" stroke-width="1"/><path d="M12 14.5 Q13 11 17 11 Q21 11 22 14.5 Z" fill="#fff"/><path d="M5 30 Q0 26 9 14 Q21 0 30 3 Q34 7 28 15" fill="none" stroke="#f8c400" stroke-width="2.6"/></svg>
<svg style="left:126px;top:1403px" width="34" height="34"><circle cx="17" cy="17" r="15" fill="#2a5ec8"/><circle cx="17" cy="17" r="15" fill="url(#gl)"/><defs><radialGradient id="gl" cx="0.6" cy="0.35" r="0.7"><stop offset="0" stop-color="#e8f0ff"/><stop offset="0.45" stop-color="#7aa4ee" stop-opacity=".8"/><stop offset="1" stop-color="#0a2a8a" stop-opacity=".9"/></radialGradient></defs><path d="M10 10 Q14 8 16 12 Q13 16 9 14 Z M18 20 Q24 18 25 23 Q21 27 18 25 Z" fill="#dfe8ff" opacity=".6"/></svg>
<svg style="left:184px;top:1403px" width="34" height="34"><path d="M3 9 L3 29 L31 29 L31 11 L16 11 L13 8 L4 8 Z" fill="#f0cf68" stroke="#c49a3a" stroke-width="1"/><rect x="6" y="6" width="4" height="3" fill="#2a2"/><rect x="13" y="7" width="4" height="3" fill="#d22"/><rect x="22" y="8" width="4" height="3" fill="#28d"/><path d="M3 14 L31 14 L31 29 L3 29 Z" fill="#fbe7a0" opacity=".8"/><path d="M9 21 L25 21 L25 30 L21 30 L21 25 L13 25 L13 30 L9 30 Z" fill="#7cc8f4" stroke="#2a7ac0" stroke-width="1"/></svg>
<svg style="left:250px;top:1403px" width="34" height="34"><path d="M3 8 L30 3 L31 8 L4 13 Z" fill="#f4f4f4" stroke="#222" stroke-width="1"/><path d="M7 7.3 L10 12 M13 6.2 L16 11 M19 5.1 L22 10 M25 4 L28 9" stroke="#111" stroke-width="2.4"/><rect x="3" y="14" width="28" height="18" rx="1" fill="#3a3a3a" stroke="#111"/><rect x="3" y="13" width="28" height="3" fill="#eee" opacity=".9"/><text x="5" y="28" font-family="Liberation Mono" font-size="8.5" font-weight="bold" fill="#fff">MPCBE</text></svg>
<svg style="left:312px;top:1403px" width="34" height="34"><circle cx="17" cy="17" r="14" fill="#1f5fc0"/><path d="M4 18 Q6 5 18 3 Q30 4 31 17 Q30 28 20 31 Q27 22 22 13 Q16 6 9 10 Z" fill="#3a8ae8"/><path d="M8 15 L26 15 L26 27 L8 27 Z" fill="#f2f2f2" stroke="#999" stroke-width=".8"/><path d="M8 15 L17 22 L26 15" fill="none" stroke="#999" stroke-width="1"/><path d="M10 9 Q15 4 20 8 L16 12 Z" fill="#e8c040"/></svg>
<svg style="left:373px;top:1403px" width="34" height="34"><rect x="3" y="4" width="26" height="26" fill="#1a6ad4"/><path d="M29 4 L32 6 L32 32 L6 32 L3 30 L29 30 Z" fill="#0a3a80"/><text x="6" y="23" font-family="Liberation Sans" font-size="15" font-weight="bold" fill="#9ad4ff">Ps</text></svg>
<svg style="left:435px;top:1403px" width="34" height="34"><rect x="3" y="4" width="28" height="27" fill="#061a3a" stroke="#2ac4f4" stroke-width="2.5"/><text x="7" y="23" font-family="Liberation Sans" font-size="15" font-weight="bold" fill="#38c8f8">Ps</text></svg>
<svg style="left:497px;top:1403px" width="34" height="34"><path d="M6 8 L28 4 L31 1 L30 6 L8 10 Z" fill="#dde" stroke="#556" stroke-width=".8"/><rect x="3" y="12" width="11" height="13" rx="2" fill="#8a9ab0" stroke="#333" stroke-width=".8"/><path d="M4 31 L18 17 L30 14 L30 24 L14 32 Z" fill="#f4f6fa" stroke="#555" stroke-width=".8"/><path d="M8 29 L28 21" stroke="#2a4ac8" stroke-width="2.5"/></svg>
<svg style="left:559px;top:1403px" width="34" height="34"><rect x="2" y="3" width="30" height="29" rx="7" fill="url(#ic)"/><defs><linearGradient id="ic" x1="0" y1="0" x2="0" y2="1"><stop offset="0" stop-color="#6ab8fa"/><stop offset="1" stop-color="#3a6ae4"/></linearGradient></defs><path d="M9 23 Q5 23 5.5 19 Q6 16 9.5 16.5 Q10.5 10 17 10.5 Q23 11 23.5 16 Q28 16 28 19.5 Q28 23 24 23 Z" fill="none" stroke="#fff" stroke-width="1.6"/></svg>
<svg style="left:621px;top:1403px" width="34" height="34"><rect x="4" y="3" width="26" height="29" fill="#fff" stroke="#1f7a38" stroke-width="1.5"/><path d="M14 18 L31 18 L31 32 L14 32 Z" fill="#e8f4e8"/><path d="M15 21 L30 21 M15 24 L30 24 M15 27 L30 27 M20 18 L20 32 M25 18 L25 32" stroke="#6ab46a" stroke-width=".8"/><text x="5" y="21" font-family="Liberation Serif" font-size="20" font-weight="bold" fill="#1a8a3a">X</text></svg>
<svg style="left:683px;top:1403px" width="34" height="34"><rect x="3" y="3" width="28" height="29" fill="url(#rd)"/><defs><linearGradient id="rd" x1="0" y1="0" x2="1" y2="1"><stop offset="0" stop-color="#ff4a4a"/><stop offset="1" stop-color="#a00000"/></linearGradient></defs><rect x="5" y="14" width="18" height="5" fill="#fff"/></svg>
<svg style="left:745px;top:1403px" width="34" height="34"><rect x="2" y="3" width="30" height="30" rx="5" fill="url(#sp)"/><defs><linearGradient id="sp" x1="0" y1="0" x2="0" y2="1"><stop offset="0" stop-color="#8ad840"/><stop offset="1" stop-color="#2a9a20"/></linearGradient></defs><path d="M8 24 Q12 12 18 10 Q15 6 18 4 Q22 6 21 11 Q26 10 29 14 Q24 15 20 14 Q17 20 19 26 Q14 22 8 24 Z" fill="#fff"/><text x="7" y="31" font-family="Liberation Sans" font-size="5" fill="#dfd">personal</text></svg>
<svg style="left:807px;top:1403px" width="34" height="34"><path d="M4 6 L20 6 L20 30 L4 30 Z" fill="#f0c850"/><path d="M4 10 L20 10 M4 14 L20 14 M4 18 L20 18 M4 22 L20 22 M4 26 L20 26" stroke="#9a7020" stroke-width="1.4"/><circle cx="24" cy="17" r="6" fill="#b87838"/><path d="M19 12 L22 4 L26 10 Z M27 10 L31 4 L30 13 Z" fill="#b87838"/><rect x="6" y="28" width="20" height="4" fill="#fff" stroke="#400" stroke-width=".6"/></svg>
<svg style="left:869px;top:1403px" width="34" height="34"><ellipse cx="14" cy="20" rx="10" ry="9" fill="#e8d040" stroke="#7a6020" stroke-width=".8"/><path d="M18 12 L30 3 L26 12 L32 12 L24 18 Z" fill="#8a6a3a"/><circle cx="11" cy="18" r="1.5" fill="#222"/><path d="M12 28 L11 33 M17 28 L18 33" stroke="#7a5a2a" stroke-width="1.6"/></svg>
<svg style="left:931px;top:1403px" width="34" height="34"><rect x="2" y="3" width="31" height="31" fill="#1a1a3a"/><path d="M3 4 L32 4 L32 14 L24 10 L16 16 L3 11 Z" fill="#c83a4a"/><path d="M3 11 L16 16 L24 10 L32 14 L32 24 L20 20 L10 26 L3 22 Z" fill="#3aa84a"/><path d="M3 22 L10 26 L20 20 L32 24 L32 33 L3 33 Z" fill="#3a4ad0"/><text x="4" y="24" font-family="Liberation Sans" font-size="13" font-weight="bold" fill="#8ac0e8" stroke="#245" stroke-width=".5">ACT</text></svg>
<svg style="left:993px;top:1403px" width="34" height="34"><rect x="1" y="2" width="32" height="32" fill="#38b4e6"/><circle cx="17" cy="18" r="12" fill="#eee"/><circle cx="17" cy="18" r="4" fill="none" stroke="#38b4e6" stroke-width="1.8"/></svg>
<svg style="left:1055px;top:1403px" width="34" height="34"><path d="M17 2 L31 9 L17 16 L3 9 Z" fill="#4ab8e8"/><path d="M3 9 L17 16 L17 33 L3 26 Z" fill="#7ac83a"/><path d="M17 16 L31 9 L31 26 L17 33 Z" fill="#f8a83a"/><rect x="12" y="6" width="10" height="6" rx="1" fill="none" stroke="#fff" stroke-width="1" transform="skewX(-10)"/><text x="6" y="26" font-size="9" fill="#fff">♫</text></svg>
<svg style="left:1117px;top:1403px" width="34" height="34"><circle cx="17" cy="18" r="15" fill="#e8eef4"/><circle cx="17" cy="18" r="13" fill="url(#it)"/><defs><radialGradient id="it" cx=".5" cy=".3" r=".8"><stop offset="0" stop-color="#8ad0ff"/><stop offset="1" stop-color="#1a5ac0"/></radialGradient></defs><path d="M13 11 L23 9 L23 21 M13 11 L13 23" stroke="#fff" stroke-width="1.8" fill="none"/><circle cx="11" cy="23" r="2.5" fill="#fff"/><circle cx="21" cy="21" r="2.5" fill="#fff"/></svg>
<svg style="left:1179px;top:1403px" width="34" height="34"><rect x="2" y="3" width="30" height="31" rx="6" fill="#0a0a0a"/><circle cx="17" cy="16" r="10" fill="#1a2a60" stroke="#888" stroke-width="1"/><circle cx="17" cy="16" r="6" fill="#3a6af0"/><circle cx="17" cy="16" r="2.5" fill="#bfe0ff"/><text x="6" y="31" font-family="Liberation Sans" font-size="5" fill="#ddd">I·O DATA</text></svg>
<svg style="left:1241px;top:1403px" width="34" height="34"><rect x="2" y="3" width="30" height="30" rx="3" fill="#e8e8e8" stroke="#111" stroke-width="2"/><rect x="5" y="6" width="24" height="24" fill="#2a6ae0" stroke="#111" stroke-width="1.2"/><path d="M5 14 Q10 9 14 14 Q18 19 23 14 Q26 12 29 15 L29 22 Q25 20 22 23 Q17 27 13 22 Q9 18 5 21 Z" fill="#f02828"/><path d="M5 21 Q9 18 13 22 Q17 27 22 23 Q25 20 29 22 L29 30 L5 30 Z" fill="#28a040"/></svg>
<svg style="left:1303px;top:1403px" width="34" height="34"><rect x="1" y="3" width="32" height="31" fill="#fff"/><rect x="1" y="3" width="32" height="1.5" fill="#111"/><rect x="1" y="32.5" width="32" height="1.5" fill="#111"/><path d="M3 8 L10 30 L17 8" fill="none" stroke="#f03030" stroke-width="3"/><path d="M20 18 L20 11 Q20 8 24 8 Q28 8 28 11 L28 18" fill="none" stroke="#2a9a3a" stroke-width="2.4"/><path d="M30 22 L23 22 Q20 22 20 25.5 Q20 29 23 29 L30 29" fill="none" stroke="#2a60e8" stroke-width="2.4"/></svg>
<svg style="left:1365px;top:1403px" width="34" height="34"><rect x="1" y="3" width="32" height="32" fill="url(#fz)"/><defs><linearGradient id="fz" x1="0" y1="0" x2="1" y2="1"><stop offset="0" stop-color="#0000c0"/><stop offset=".5" stop-color="#3a0a5a"/><stop offset="1" stop-color="#c02020"/></linearGradient></defs><path d="M6 30 L6 8 L16 8 M6 17 L13 17" fill="none" stroke="#f8a010" stroke-width="3"/><path d="M17 17 L28 17 L18 29 L29 29" fill="none" stroke="#f8d010" stroke-width="3"/></svg>
<svg style="left:1427px;top:1403px" width="34" height="34"><circle cx="17" cy="18" r="15" fill="#e4ecf4"/><circle cx="17" cy="18" r="13.5" fill="url(#kn)"/><defs><radialGradient id="kn" cx=".45" cy=".3" r=".8"><stop offset="0" stop-color="#7ac0ff"/><stop offset="1" stop-color="#1a4ab8"/></radialGradient></defs><path d="M11 27 L23 27 L21 23 Q24 17 21 12 Q18 8 13 10 L10 15 L12 17 L15 15 Q16 19 12 23 Z" fill="#f0f0f0"/></svg>
<svg style="left:1489px;top:1403px" width="34" height="34"><rect x="4" y="7" width="16" height="16" fill="#a8e090" transform="rotate(-12 12 15)"/><rect x="8" y="11" width="14" height="16" fill="#bfe0f8"/><rect x="13" y="12" width="17" height="17" fill="#fbe870" stroke="#e8c840" stroke-width=".8" transform="rotate(-14 21 20)"/></svg>
<svg style="left:1551px;top:1403px" width="34" height="34"><rect x="2" y="5" width="31" height="24" rx="2" fill="#4aaef0" stroke="#2a80c0"/><circle cx="10" cy="13" r="4" fill="none" stroke="#fff" stroke-width="1.5"/><path d="M10 9 L14 12 L10 13 Z" fill="#f89a20"/><rect x="17" y="10" width="11" height="3" fill="#fff"/><rect x="17" y="16" width="11" height="3" fill="#fff"/><ellipse cx="17" cy="30" rx="7" ry="4" fill="#ddd" stroke="#999" stroke-width=".6"/></svg>
<div class="a" style="left:2149px;top:1412px;width:30px;height:17px;border:1.5px solid #fff;border-radius:2px;background:rgba(0,0,0,.12)"></div>
<svg style="left:2151px;top:1414px" width="26" height="13"><path d="M2 2.5 L24 2.5 M2 6 L24 6 M2 9.5 L24 9.5" stroke="#fff" stroke-width="1.6" stroke-dasharray="2.2 1.3"/></svg>
<div class="a" style="left:2192px;top:1417px;width:0;height:0;border-left:4px solid transparent;border-right:4px solid transparent;border-bottom:5px solid #fff"></div>
<svg style="left:2210px;top:1412px" width="20" height="14"><path d="M3 13 Q0 13 1 9 Q2 6 5 7 Q6 1 12 2 Q17 2 17 6 Q20 7 19 11 Q19 13 16 13 Z" fill="#fff"/></svg>
<svg style="left:2235px;top:1410px" width="20" height="20"><path d="M3 11 Q0 11 1 7 Q2 4 5 5 Q6 0 11 1 Q16 1 16 5 Q19 6 18 10 Z" fill="#cfe0e8"/><circle cx="12" cy="13" r="6" fill="#2aa040"/><path d="M9 13 L11.5 15.5 L15.5 10.5" fill="none" stroke="#fff" stroke-width="1.6"/></svg>
<svg style="left:2259px;top:1411px" width="20" height="18"><rect x="1" y="1" width="17" height="16" fill="#1a3ab0" stroke="#fff"/><path d="M3 4 L8 4 M10 4 L16 4 M3 8 L16 8 M3 12 L6 12 M8 12 L16 12" stroke="#fff" stroke-width="1.2"/></svg>
<svg style="left:2283px;top:1411px" width="20" height="18"><path d="M2 9 L18 9 M10 2 L10 16 M4 4 L16 14 M16 4 L4 14" stroke="#f8901a" stroke-width="1.6"/><circle cx="7" cy="3" r="1.2" fill="#111"/><circle cx="13" cy="3" r="1.2" fill="#111"/></svg>
<div class="a" style="left:2308px;top:1411px;width:17px;height:17px;background:repeating-linear-gradient(45deg,#2a50c0 0 2px,#f0d020 2px 4px);border:1px solid #124"></div>
<svg style="left:2332px;top:1411px" width="18" height="18"><path d="M3 17 L3 2 M3 3 L14 3 L11 7 L14 10 L3 10" fill="none" stroke="#fff" stroke-width="1.5"/></svg>
<svg style="left:2355px;top:1411px" width="20" height="18"><rect x="6" y="4" width="12" height="10" fill="none" stroke="#fff" stroke-width="1.4"/><path d="M12 14 L12 17 M8 17 L16 17 M3 2 L3 9" stroke="#fff" stroke-width="1.4"/><circle cx="3" cy="3" r="2" fill="none" stroke="#fff"/></svg>
<svg style="left:2380px;top:1411px" width="20" height="18"><path d="M1 6 L5 6 L10 2 L10 16 L5 12 L1 12 Z" fill="#fff"/><path d="M13 5 Q16 9 13 13 M15 3 Q19 9 15 15" fill="none" stroke="#fff" stroke-width="1.3"/></svg>
<div class="a" style="left:2400px;top:1401px;width:32px;height:39px;background:rgba(60,40,40,0.35)"></div>
<svg style="left:2404px;top:1409px" width="24" height="24"><path d="M6 20 L13 3 L20 20" fill="none" stroke="#fff" stroke-width="3"/><circle cx="5" cy="18" r="4.5" fill="#222"/><path d="M3 16 L7 20 M7 16 L3 20" stroke="#fff" stroke-width="1"/></svg>
<svg style="left:2435px;top:1410px" width="19" height="21"><rect x="0" y="0" width="19" height="21" fill="#fff"/><path d="M5 18 L10 3 L15 18" fill="none" stroke="#111" stroke-width="3"/></svg>
<div class="t" style="left:2490px;top:1406px;font-size:13px;color:#fff">18:37</div>
<div class="t" style="left:2473px;top:1422px;font-size:13px;color:#fff">2014/03/15</div>

</body></html>
